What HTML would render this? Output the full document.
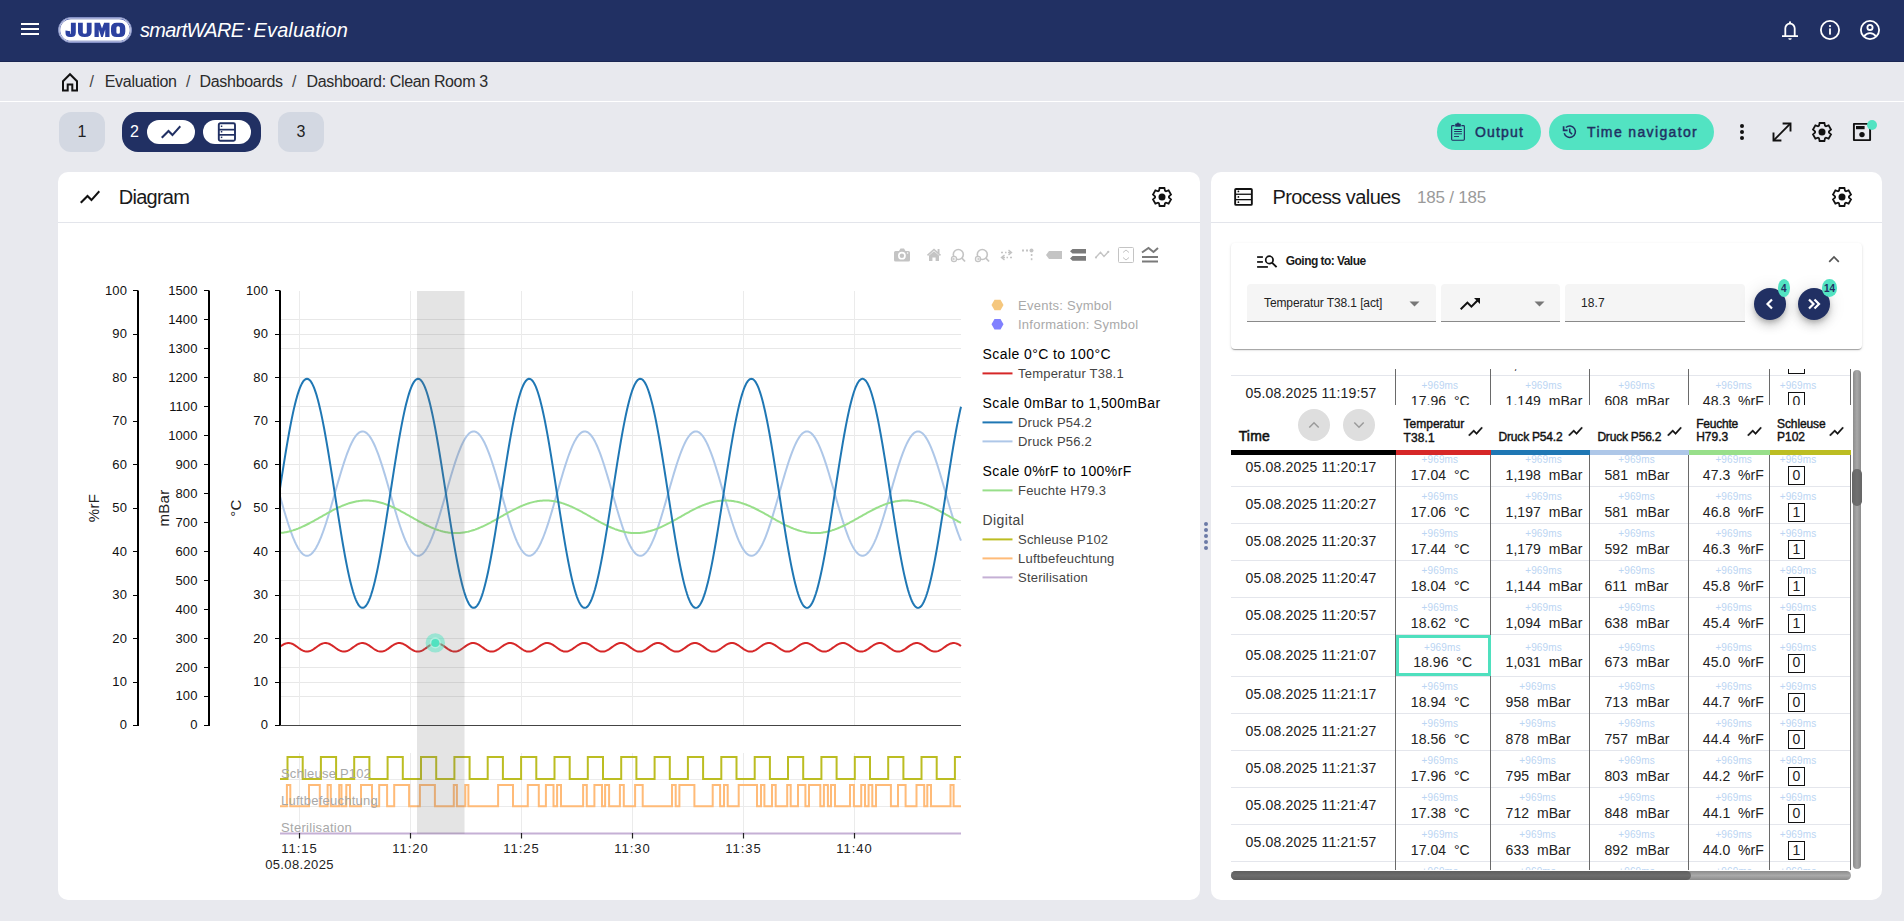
<!DOCTYPE html><html><head><meta charset="utf-8"><style>
html,body{margin:0;padding:0;width:1904px;height:921px;overflow:hidden;background:#E8E9EE;font-family:'Liberation Sans', sans-serif;}
.t{position:absolute;white-space:pre;font-family:'Liberation Sans', sans-serif;}
</style></head><body>
<div style="position:absolute;left:0px;top:0px;width:1904px;height:62px;background:#213063;border-radius:0;"></div>
<div style="position:absolute;left:0px;top:61px;width:1904px;height:1px;background:#1a2652;border-radius:0;"></div>
<div style="position:absolute;left:21px;top:23px;width:18px;height:2px;background:#fff;border-radius:0;"></div>
<div style="position:absolute;left:21px;top:28px;width:18px;height:2px;background:#fff;border-radius:0;"></div>
<div style="position:absolute;left:21px;top:33px;width:18px;height:2px;background:#fff;border-radius:0;"></div>
<div style="position:absolute;left:58px;top:17px;width:74px;height:26px;box-sizing:border-box;border-radius:13px;background:#fff;border:1.5px solid #8490c6;box-shadow:inset 0 0 0 0.6px #fff, inset 0 0 0 1.2px #4a5bab;"></div>
<svg style="position:absolute;left:0px;top:0px;overflow:visible;" width="200" height="60" viewBox="0 0 200 60"><path fill="#2c41a0" fill-rule="evenodd" d="M70.9 22.8 H75.8 V32.6 Q75.8 37.1 71.3 37.1 H69.9 Q65.5 37.1 65.5 32.8 V30.4 L70.2 31.2 V33.3 Q70.2 33.9 70.8 33.9 Q70.9 33.9 70.9 33.2 Z M78 22.8 H82.8 V32.2 Q82.8 33.7 84.8 33.7 Q86.8 33.7 86.8 32.2 V22.8 H91.6 V32.1 Q91.6 37.1 84.8 37.1 Q78 37.1 78 32.1 Z M94.5 37.1 V22.8 H99.9 L102 28.6 L104.1 22.8 H109.5 V37.1 H105.2 V29.4 L102.8 36.9 H101.2 L98.8 29.4 V37.1 Z M116.6 22.8 H119.7 Q125.3 22.8 125.3 28.3 V31.6 Q125.3 37.1 119.7 37.1 H116.6 Q111 37.1 111 31.6 V28.3 Q111 22.8 116.6 22.8 Z M117.9 26.2 Q116.4 26.2 116.4 27.7 V32.2 Q116.4 33.7 117.9 33.7 H118.4 Q119.9 33.7 119.9 32.2 V27.7 Q119.9 26.2 118.4 26.2 Z"/></svg>
<div class="t" style="left:140.00px;top:20.00px;font-size:20px;line-height:20px;color:#fff;font-weight:normal;letter-spacing:-0.7px;font-style:italic;">smartWARE</div>
<svg style="position:absolute;left:247px;top:27px;overflow:visible;" width="4" height="4" viewBox="0 0 4 4"><circle cx="2" cy="2" r="1.3" fill="#fff"/></svg>
<div class="t" style="left:253.60px;top:20.00px;font-size:20px;line-height:20px;color:#fff;font-weight:normal;letter-spacing:0.1px;font-style:italic;">Evaluation</div>
<svg style="position:absolute;left:1780px;top:20px;overflow:visible;" width="20" height="20" viewBox="0 0 20 20"><path d="M10 1.2 C10.6 1.2 11 1.6 11 2.1 L11 2.7 C13.8 3.3 15.6 5.7 15.6 8.6 L15.6 15.3 L18 15.3 L18 17 L2 17 L2 15.3 L4.4 15.3 L4.4 8.6 C4.4 5.7 6.2 3.3 9 2.7 L9 2.1 C9 1.6 9.4 1.2 10 1.2 Z M6.2 15.3 L13.8 15.3 L13.8 8.6 C13.8 6.3 12.2 4.4 10 4.4 C7.8 4.4 6.2 6.3 6.2 8.6 Z" fill="#fff"/><path d="M8.3 18.2 L11.7 18.2 C11.7 19.2 10.9 19.8 10 19.8 C9.1 19.8 8.3 19.2 8.3 18.2Z" fill="#fff"/></svg>
<svg style="position:absolute;left:1820px;top:20px;overflow:visible;" width="20" height="20" viewBox="0 0 20 20"><circle cx="10" cy="10" r="9.1" fill="none" stroke="#fff" stroke-width="1.8"/><rect x="9.1" y="8.4" width="1.8" height="6.2" fill="#fff"/><circle cx="10" cy="6.1" r="1.1" fill="#fff"/></svg>
<svg style="position:absolute;left:1860px;top:20px;overflow:visible;" width="20" height="20" viewBox="0 0 20 20"><circle cx="10" cy="10" r="9.1" fill="none" stroke="#fff" stroke-width="1.8"/><circle cx="10" cy="7.4" r="2.6" fill="none" stroke="#fff" stroke-width="1.8"/><path d="M4.2 16.2 C5.6 14.1 7.6 13.1 10 13.1 C12.4 13.1 14.4 14.1 15.8 16.2" fill="none" stroke="#fff" stroke-width="1.8"/></svg>
<div style="position:absolute;left:0px;top:101px;width:1904px;height:1px;background:#ffffff;border-radius:0;"></div>
<svg style="position:absolute;left:61px;top:72px;overflow:visible;" width="18" height="20" viewBox="0 0 18 20"><path d="M2 9.2 L9 2.2 L16 9.2 L16 18.4 L11.3 18.4 L11.3 12.6 L6.7 12.6 L6.7 18.4 L2 18.4 Z" fill="none" stroke="#111" stroke-width="2" stroke-linejoin="miter"/></svg>
<div class="t" style="left:89.50px;top:74.00px;font-size:16px;line-height:16px;color:#444;font-weight:normal;letter-spacing:0px;font-style:normal;">/</div>
<div class="t" style="left:104.70px;top:74.00px;font-size:16px;line-height:16px;color:#2b2b2b;font-weight:normal;letter-spacing:-0.27px;font-style:normal;">Evaluation</div>
<div class="t" style="left:186.00px;top:74.00px;font-size:16px;line-height:16px;color:#444;font-weight:normal;letter-spacing:0px;font-style:normal;">/</div>
<div class="t" style="left:199.50px;top:74.00px;font-size:16px;line-height:16px;color:#2b2b2b;font-weight:normal;letter-spacing:-0.3px;font-style:normal;">Dashboards</div>
<div class="t" style="left:292.00px;top:74.00px;font-size:16px;line-height:16px;color:#444;font-weight:normal;letter-spacing:0px;font-style:normal;">/</div>
<div class="t" style="left:306.60px;top:74.00px;font-size:16px;line-height:16px;color:#2b2b2b;font-weight:normal;letter-spacing:-0.36px;font-style:normal;">Dashboard: Clean Room 3</div>
<div style="position:absolute;left:59px;top:112px;width:46px;height:40px;background:#D3D8E2;border-radius:12px;"></div>
<div class="t" style="left:-218.00px;width:600px;text-align:center;top:124.00px;font-size:16px;line-height:16px;color:#222;font-weight:normal;letter-spacing:0px;font-style:normal;">1</div>
<div style="position:absolute;left:122px;top:112px;width:139px;height:40px;background:#213063;border-radius:16px;"></div>
<div class="t" style="left:130.00px;top:124.00px;font-size:16px;line-height:16px;color:#fff;font-weight:normal;letter-spacing:0px;font-style:normal;">2</div>
<div style="position:absolute;left:147px;top:120px;width:48px;height:24px;background:#fff;border-radius:12px;"></div>
<div style="position:absolute;left:203px;top:120px;width:48px;height:24px;background:#fff;border-radius:12px;"></div>
<svg style="position:absolute;left:159px;top:119.5px;overflow:visible;" width="24" height="24" viewBox="0 0 24 24"><path d="M3.5 18.49l6-6.01 4 4L22 6.92l-1.41-1.41-7.09 7.97-4-4L2 16.99z" fill="#213063"/></svg>
<svg style="position:absolute;left:217px;top:122px;overflow:visible;" width="20" height="20" viewBox="0 0 20 20"><rect x="1.8" y="1.3" width="16.2" height="17.5" rx="1.5" fill="none" stroke="#213063" stroke-width="1.9"/><rect x="1.8" y="6.8" width="16.2" height="1.7" fill="#213063"/><rect x="1.8" y="12" width="16.2" height="1.7" fill="#213063"/><rect x="3.8" y="3.5" width="1.5" height="1.5" fill="#213063"/><rect x="3.8" y="9" width="1.5" height="1.5" fill="#213063"/><rect x="3.8" y="14.6" width="1.5" height="1.5" fill="#213063"/></svg>
<div style="position:absolute;left:278px;top:112px;width:46px;height:40px;background:#D3D8E2;border-radius:12px;"></div>
<div class="t" style="left:1.00px;width:600px;text-align:center;top:124.00px;font-size:16px;line-height:16px;color:#222;font-weight:normal;letter-spacing:0px;font-style:normal;">3</div>
<div style="position:absolute;left:1437px;top:114px;width:104px;height:36px;background:#52E3C2;border-radius:18px;"></div>
<div style="position:absolute;left:1549px;top:114px;width:165px;height:36px;background:#52E3C2;border-radius:18px;"></div>
<div class="t" style="left:1475.00px;top:125.00px;font-size:14px;line-height:14px;color:#213063;font-weight:normal;letter-spacing:1.15px;font-style:normal;-webkit-text-stroke:0.45px #213063;">Output</div>
<div class="t" style="left:1587.00px;top:125.00px;font-size:14px;line-height:14px;color:#213063;font-weight:normal;letter-spacing:1.36px;font-style:normal;-webkit-text-stroke:0.45px #213063;">Time navigator</div>
<svg style="position:absolute;left:1450px;top:122px;overflow:visible;" width="16" height="20" viewBox="0 0 16 20"><rect x="1.65" y="3.55" width="12.7" height="14.7" rx="0.9" fill="none" stroke="#213063" stroke-width="1.15"/><rect x="4.6" y="2.2" width="6.8" height="2.6" fill="#52E3C2"/><rect x="5.2" y="1.4" width="5.6" height="3.4" rx="0.9" fill="#213063"/><circle cx="8" cy="1.3" r="0.9" fill="#213063"/><rect x="4" y="7.1" width="8" height="0.9" rx="0.4" fill="#213063"/><rect x="4" y="9.1" width="8" height="0.9" rx="0.4" fill="#213063"/><rect x="4" y="11.2" width="8" height="1.2" fill="#213063" opacity="0.75"/><rect x="4" y="14" width="5" height="0.9" fill="#213063"/></svg>
<svg style="position:absolute;left:1561px;top:124px;overflow:visible;" width="16" height="16" viewBox="0 0 16 16"><path d="M4.89 3.46 A5.7 5.7 0 1 1 3.22 9.27" fill="none" stroke="#213063" stroke-width="1.5"/><path d="M2.6 2.2 V6.4 H6.6" fill="none" stroke="#213063" stroke-width="1.7"/><path d="M8.7 4.6 V7.9 L11.1 10.3" fill="none" stroke="#213063" stroke-width="1.5"/></svg>
<svg style="position:absolute;left:1740px;top:124px;overflow:visible;" width="4" height="4" viewBox="0 0 4 4"><circle cx="2" cy="2" r="2" fill="#111"/></svg>
<svg style="position:absolute;left:1740px;top:130px;overflow:visible;" width="4" height="4" viewBox="0 0 4 4"><circle cx="2" cy="2" r="2" fill="#111"/></svg>
<svg style="position:absolute;left:1740px;top:136px;overflow:visible;" width="4" height="4" viewBox="0 0 4 4"><circle cx="2" cy="2" r="2" fill="#111"/></svg>
<svg style="position:absolute;left:1772px;top:122px;overflow:visible;" width="20" height="20" viewBox="0 0 20 20"><path d="M2.2 17.8 L17.8 2.2" stroke="#111" stroke-width="1.9"/><path d="M10.6 1.5 L18.5 1.5 L18.5 9.4" fill="none" stroke="#111" stroke-width="1.9"/><path d="M1.5 10.6 L1.5 18.5 L9.4 18.5" fill="none" stroke="#111" stroke-width="1.9"/></svg>
<svg style="position:absolute;left:1812px;top:122px;overflow:visible;" width="20" height="20" viewBox="0 0 20 20"><path d="M7.00 3.70 L7.60 1.00 L12.40 1.00 L13.00 3.70 L13.96 4.25 L16.59 3.42 L18.99 7.58 L16.96 9.45 L16.96 10.55 L18.99 12.42 L16.59 16.58 L13.96 15.75 L13.00 16.30 L12.40 19.00 L7.60 19.00 L7.00 16.30 L6.04 15.75 L3.41 16.58 L1.01 12.42 L3.04 10.55 L3.04 9.45 L1.01 7.58 L3.41 3.42 L6.04 4.25 Z" fill="none" stroke="#111" stroke-width="1.8" stroke-linejoin="miter"/><circle cx="10" cy="10" r="3.5" fill="#111"/></svg>
<svg style="position:absolute;left:1852px;top:122px;overflow:visible;" width="20" height="20" viewBox="0 0 20 20"><path d="M1.9 1.9 L15.5 1.9 L18.1 4.5 L18.1 18.1 L1.9 18.1 Z" fill="none" stroke="#111" stroke-width="1.9" stroke-linejoin="round"/><rect x="4" y="4" width="8.6" height="3.2" fill="#111"/><circle cx="10" cy="12.6" r="2.7" fill="#111"/></svg>
<svg style="position:absolute;left:1866px;top:119px;overflow:visible;" width="12" height="12" viewBox="0 0 12 12"><circle cx="6" cy="6" r="5" fill="#52E3C2"/></svg>
<div style="position:absolute;left:58px;top:172px;width:1142px;height:728px;background:#fff;border-radius:10px;"></div>
<div style="position:absolute;left:1211px;top:172px;width:671px;height:728px;background:#fff;border-radius:10px;"></div>
<div style="position:absolute;left:58px;top:222px;width:1142px;height:1px;background:#E3E5EB;border-radius:0;"></div>
<div style="position:absolute;left:1211px;top:222px;width:671px;height:1px;background:#E3E5EB;border-radius:0;"></div>
<svg style="position:absolute;left:78px;top:184.5px;overflow:visible;" width="24" height="24" viewBox="0 0 24 24"><path d="M3.5 18.49l6-6.01 4 4L22 6.92l-1.41-1.41-7.09 7.97-4-4L2 16.99z" fill="#111"/></svg>
<div class="t" style="left:118.80px;top:187.00px;font-size:20px;line-height:20px;color:#1a1a1a;font-weight:normal;letter-spacing:-0.75px;font-style:normal;">Diagram</div>
<svg style="position:absolute;left:1152.4px;top:186.9px;overflow:visible;" width="20" height="20" viewBox="0 0 20 20"><path d="M7.00 3.70 L7.60 1.00 L12.40 1.00 L13.00 3.70 L13.96 4.25 L16.59 3.42 L18.99 7.58 L16.96 9.45 L16.96 10.55 L18.99 12.42 L16.59 16.58 L13.96 15.75 L13.00 16.30 L12.40 19.00 L7.60 19.00 L7.00 16.30 L6.04 15.75 L3.41 16.58 L1.01 12.42 L3.04 10.55 L3.04 9.45 L1.01 7.58 L3.41 3.42 L6.04 4.25 Z" fill="none" stroke="#111" stroke-width="1.8" stroke-linejoin="miter"/><circle cx="10" cy="10" r="3.5" fill="#111"/></svg>
<svg style="position:absolute;left:1233px;top:187px;overflow:visible;" width="20" height="20" viewBox="0 0 20 20"><rect x="2.15" y="1.95" width="16.7" height="15.9" rx="0.9" fill="none" stroke="#111" stroke-width="1.9"/><rect x="2" y="6.6" width="17" height="1.3" fill="#111"/><rect x="2" y="12" width="17" height="1.3" fill="#111"/><circle cx="5.4" cy="4.4" r="0.9" fill="#111"/><circle cx="5.4" cy="9.9" r="0.9" fill="#111"/><circle cx="5.4" cy="15.2" r="0.9" fill="#111"/></svg>
<div class="t" style="left:1272.40px;top:187.00px;font-size:20px;line-height:20px;color:#1a1a1a;font-weight:normal;letter-spacing:-0.55px;font-style:normal;">Process values</div>
<div class="t" style="left:1417.00px;top:189.00px;font-size:17px;line-height:17px;color:#9a9a9a;font-weight:normal;letter-spacing:-0.2px;font-style:normal;">185 / 185</div>
<svg style="position:absolute;left:1832px;top:187px;overflow:visible;" width="20" height="20" viewBox="0 0 20 20"><path d="M7.00 3.70 L7.60 1.00 L12.40 1.00 L13.00 3.70 L13.96 4.25 L16.59 3.42 L18.99 7.58 L16.96 9.45 L16.96 10.55 L18.99 12.42 L16.59 16.58 L13.96 15.75 L13.00 16.30 L12.40 19.00 L7.60 19.00 L7.00 16.30 L6.04 15.75 L3.41 16.58 L1.01 12.42 L3.04 10.55 L3.04 9.45 L1.01 7.58 L3.41 3.42 L6.04 4.25 Z" fill="none" stroke="#111" stroke-width="1.8" stroke-linejoin="miter"/><circle cx="10" cy="10" r="3.5" fill="#111"/></svg>
<div style="position:absolute;left:1200px;top:172px;width:11px;height:728px;background:#E8E9EE;border-radius:0;"></div>
<svg style="position:absolute;left:1204px;top:522px;overflow:visible;" width="4" height="4" viewBox="0 0 4 4"><circle cx="2" cy="2" r="2" fill="#6b7aa6"/></svg>
<svg style="position:absolute;left:1204px;top:528px;overflow:visible;" width="4" height="4" viewBox="0 0 4 4"><circle cx="2" cy="2" r="2" fill="#6b7aa6"/></svg>
<svg style="position:absolute;left:1204px;top:534px;overflow:visible;" width="4" height="4" viewBox="0 0 4 4"><circle cx="2" cy="2" r="2" fill="#6b7aa6"/></svg>
<svg style="position:absolute;left:1204px;top:540px;overflow:visible;" width="4" height="4" viewBox="0 0 4 4"><circle cx="2" cy="2" r="2" fill="#6b7aa6"/></svg>
<svg style="position:absolute;left:1204px;top:546px;overflow:visible;" width="4" height="4" viewBox="0 0 4 4"><circle cx="2" cy="2" r="2" fill="#6b7aa6"/></svg>
<svg style="position:absolute;left:0;top:0" width="1904" height="921" viewBox="0 0 1904 921"><line x1="280.0" y1="682.5" x2="961.0" y2="682.5" stroke="#e8e8e8" stroke-width="1"/><line x1="280.0" y1="638.5" x2="961.0" y2="638.5" stroke="#e8e8e8" stroke-width="1"/><line x1="280.0" y1="595.5" x2="961.0" y2="595.5" stroke="#e8e8e8" stroke-width="1"/><line x1="280.0" y1="551.5" x2="961.0" y2="551.5" stroke="#e8e8e8" stroke-width="1"/><line x1="280.0" y1="508.5" x2="961.0" y2="508.5" stroke="#e8e8e8" stroke-width="1"/><line x1="280.0" y1="464.5" x2="961.0" y2="464.5" stroke="#e8e8e8" stroke-width="1"/><line x1="280.0" y1="421.5" x2="961.0" y2="421.5" stroke="#e8e8e8" stroke-width="1"/><line x1="280.0" y1="377.5" x2="961.0" y2="377.5" stroke="#e8e8e8" stroke-width="1"/><line x1="280.0" y1="334.5" x2="961.0" y2="334.5" stroke="#e8e8e8" stroke-width="1"/><line x1="280.0" y1="696.5" x2="961.0" y2="696.5" stroke="#e8e8e8" stroke-width="1"/><line x1="280.0" y1="667.5" x2="961.0" y2="667.5" stroke="#e8e8e8" stroke-width="1"/><line x1="280.0" y1="638.5" x2="961.0" y2="638.5" stroke="#e8e8e8" stroke-width="1"/><line x1="280.0" y1="609.5" x2="961.0" y2="609.5" stroke="#e8e8e8" stroke-width="1"/><line x1="280.0" y1="580.5" x2="961.0" y2="580.5" stroke="#e8e8e8" stroke-width="1"/><line x1="280.0" y1="551.5" x2="961.0" y2="551.5" stroke="#e8e8e8" stroke-width="1"/><line x1="280.0" y1="522.5" x2="961.0" y2="522.5" stroke="#e8e8e8" stroke-width="1"/><line x1="280.0" y1="493.5" x2="961.0" y2="493.5" stroke="#e8e8e8" stroke-width="1"/><line x1="280.0" y1="464.5" x2="961.0" y2="464.5" stroke="#e8e8e8" stroke-width="1"/><line x1="280.0" y1="435.5" x2="961.0" y2="435.5" stroke="#e8e8e8" stroke-width="1"/><line x1="280.0" y1="406.5" x2="961.0" y2="406.5" stroke="#e8e8e8" stroke-width="1"/><line x1="280.0" y1="377.5" x2="961.0" y2="377.5" stroke="#e8e8e8" stroke-width="1"/><line x1="280.0" y1="348.5" x2="961.0" y2="348.5" stroke="#e8e8e8" stroke-width="1"/><line x1="280.0" y1="319.5" x2="961.0" y2="319.5" stroke="#e8e8e8" stroke-width="1"/><line x1="299.5" y1="291.0" x2="299.5" y2="725.5" stroke="#ebebeb" stroke-width="1"/><line x1="299.5" y1="753" x2="299.5" y2="833" stroke="#ebebeb" stroke-width="1"/><line x1="410.5" y1="291.0" x2="410.5" y2="725.5" stroke="#ebebeb" stroke-width="1"/><line x1="410.5" y1="753" x2="410.5" y2="833" stroke="#ebebeb" stroke-width="1"/><line x1="521.5" y1="291.0" x2="521.5" y2="725.5" stroke="#ebebeb" stroke-width="1"/><line x1="521.5" y1="753" x2="521.5" y2="833" stroke="#ebebeb" stroke-width="1"/><line x1="632.5" y1="291.0" x2="632.5" y2="725.5" stroke="#ebebeb" stroke-width="1"/><line x1="632.5" y1="753" x2="632.5" y2="833" stroke="#ebebeb" stroke-width="1"/><line x1="743.5" y1="291.0" x2="743.5" y2="725.5" stroke="#ebebeb" stroke-width="1"/><line x1="743.5" y1="753" x2="743.5" y2="833" stroke="#ebebeb" stroke-width="1"/><line x1="854.5" y1="291.0" x2="854.5" y2="725.5" stroke="#ebebeb" stroke-width="1"/><line x1="854.5" y1="753" x2="854.5" y2="833" stroke="#ebebeb" stroke-width="1"/><line x1="280.0" y1="779.5" x2="961.0" y2="779.5" stroke="#ebebeb" stroke-width="1"/><line x1="280.0" y1="806.5" x2="961.0" y2="806.5" stroke="#ebebeb" stroke-width="1"/><path d="M280.0 496.33 L281.0 499.84 L282.0 503.33 L283.0 506.78 L284.0 510.19 L285.0 513.56 L286.0 516.85 L287.0 520.07 L288.0 523.21 L289.0 526.26 L290.0 529.19 L291.0 532.02 L292.0 534.72 L293.0 537.29 L294.0 539.72 L295.0 542.01 L296.0 544.14 L297.0 546.10 L298.0 547.90 L299.0 549.53 L300.0 550.98 L301.0 552.24 L302.0 553.31 L303.0 554.20 L304.0 554.89 L305.0 555.39 L306.0 555.68 L307.0 555.78 L308.0 555.68 L309.0 555.39 L310.0 554.89 L311.0 554.20 L312.0 553.31 L313.0 552.24 L314.0 550.98 L315.0 549.53 L316.0 547.90 L317.0 546.10 L318.0 544.14 L319.0 542.01 L320.0 539.72 L321.0 537.29 L322.0 534.72 L323.0 532.02 L324.0 529.19 L325.0 526.26 L326.0 523.21 L327.0 520.07 L328.0 516.85 L329.0 513.56 L330.0 510.19 L331.0 506.78 L332.0 503.33 L333.0 499.84 L334.0 496.33 L335.0 492.82 L336.0 489.30 L337.0 485.80 L338.0 482.33 L339.0 478.89 L340.0 475.50 L341.0 472.17 L342.0 468.90 L343.0 465.72 L344.0 462.62 L345.0 459.62 L346.0 456.73 L347.0 453.96 L348.0 451.32 L349.0 448.81 L350.0 446.44 L351.0 444.23 L352.0 442.17 L353.0 440.28 L354.0 438.56 L355.0 437.01 L356.0 435.65 L357.0 434.47 L358.0 433.48 L359.0 432.68 L360.0 432.08 L361.0 431.67 L362.0 431.46 L363.0 431.45 L364.0 431.64 L365.0 432.03 L366.0 432.61 L367.0 433.39 L368.0 434.36 L369.0 435.52 L370.0 436.87 L371.0 438.40 L372.0 440.10 L373.0 441.98 L374.0 444.02 L375.0 446.22 L376.0 448.57 L377.0 451.06 L378.0 453.69 L379.0 456.45 L380.0 459.33 L381.0 462.32 L382.0 465.40 L383.0 468.58 L384.0 471.84 L385.0 475.16 L386.0 478.55 L387.0 481.98 L388.0 485.46 L389.0 488.95 L390.0 492.46 L391.0 495.98 L392.0 499.49 L393.0 502.98 L394.0 506.44 L395.0 509.86 L396.0 513.22 L397.0 516.53 L398.0 519.76 L399.0 522.90 L400.0 525.96 L401.0 528.91 L402.0 531.74 L403.0 534.46 L404.0 537.04 L405.0 539.49 L406.0 541.79 L407.0 543.93 L408.0 545.91 L409.0 547.73 L410.0 549.37 L411.0 550.84 L412.0 552.12 L413.0 553.22 L414.0 554.12 L415.0 554.83 L416.0 555.35 L417.0 555.66 L418.0 555.78 L419.0 555.70 L420.0 555.43 L421.0 554.95 L422.0 554.28 L423.0 553.41 L424.0 552.36 L425.0 551.11 L426.0 549.68 L427.0 548.07 L428.0 546.29 L429.0 544.34 L430.0 542.23 L431.0 539.96 L432.0 537.54 L433.0 534.98 L434.0 532.30 L435.0 529.48 L436.0 526.55 L437.0 523.52 L438.0 520.39 L439.0 517.18 L440.0 513.89 L441.0 510.53 L442.0 507.12 L443.0 503.67 L444.0 500.19 L445.0 496.68 L446.0 493.17 L447.0 489.65 L448.0 486.15 L449.0 482.68 L450.0 479.23 L451.0 475.84 L452.0 472.50 L453.0 469.23 L454.0 466.03 L455.0 462.93 L456.0 459.92 L457.0 457.02 L458.0 454.23 L459.0 451.58 L460.0 449.06 L461.0 446.67 L462.0 444.44 L463.0 442.37 L464.0 440.46 L465.0 438.72 L466.0 437.16 L467.0 435.78 L468.0 434.58 L469.0 433.57 L470.0 432.75 L471.0 432.13 L472.0 431.70 L473.0 431.47 L474.0 431.44 L475.0 431.61 L476.0 431.98 L477.0 432.54 L478.0 433.30 L479.0 434.25 L480.0 435.40 L481.0 436.73 L482.0 438.24 L483.0 439.92 L484.0 441.78 L485.0 443.81 L486.0 445.99 L487.0 448.33 L488.0 450.81 L489.0 453.42 L490.0 456.17 L491.0 459.04 L492.0 462.01 L493.0 465.09 L494.0 468.26 L495.0 471.51 L496.0 474.83 L497.0 478.21 L498.0 481.64 L499.0 485.11 L500.0 488.60 L501.0 492.11 L502.0 495.63 L503.0 499.14 L504.0 502.63 L505.0 506.09 L506.0 509.52 L507.0 512.89 L508.0 516.20 L509.0 519.44 L510.0 522.59 L511.0 525.66 L512.0 528.62 L513.0 531.46 L514.0 534.19 L515.0 536.79 L516.0 539.25 L517.0 541.56 L518.0 543.72 L519.0 545.72 L520.0 547.56 L521.0 549.22 L522.0 550.70 L523.0 552.00 L524.0 553.11 L525.0 554.04 L526.0 554.77 L527.0 555.30 L528.0 555.64 L529.0 555.78 L530.0 555.72 L531.0 555.46 L532.0 555.01 L533.0 554.35 L534.0 553.51 L535.0 552.47 L536.0 551.24 L537.0 549.83 L538.0 548.24 L539.0 546.48 L540.0 544.54 L541.0 542.45 L542.0 540.19 L543.0 537.79 L544.0 535.25 L545.0 532.57 L546.0 529.77 L547.0 526.85 L548.0 523.83 L549.0 520.71 L550.0 517.50 L551.0 514.22 L552.0 510.87 L553.0 507.47 L554.0 504.02 L555.0 500.54 L556.0 497.03 L557.0 493.52 L558.0 490.01 L559.0 486.50 L560.0 483.02 L561.0 479.58 L562.0 476.17 L563.0 472.83 L564.0 469.55 L565.0 466.35 L566.0 463.23 L567.0 460.21 L568.0 457.30 L569.0 454.51 L570.0 451.84 L571.0 449.30 L572.0 446.91 L573.0 444.66 L574.0 442.57 L575.0 440.65 L576.0 438.89 L577.0 437.31 L578.0 435.91 L579.0 434.69 L580.0 433.66 L581.0 432.82 L582.0 432.18 L583.0 431.73 L584.0 431.49 L585.0 431.44 L586.0 431.59 L587.0 431.93 L588.0 432.48 L589.0 433.22 L590.0 434.15 L591.0 435.27 L592.0 436.58 L593.0 438.08 L594.0 439.75 L595.0 441.59 L596.0 443.60 L597.0 445.76 L598.0 448.09 L599.0 450.55 L600.0 453.16 L601.0 455.89 L602.0 458.74 L603.0 461.71 L604.0 464.78 L605.0 467.94 L606.0 471.18 L607.0 474.49 L608.0 477.87 L609.0 481.29 L610.0 484.76 L611.0 488.25 L612.0 491.76 L613.0 495.28 L614.0 498.79 L615.0 502.28 L616.0 505.75 L617.0 509.18 L618.0 512.55 L619.0 515.87 L620.0 519.12 L621.0 522.28 L622.0 525.35 L623.0 528.32 L624.0 531.18 L625.0 533.92 L626.0 536.54 L627.0 539.01 L628.0 541.34 L629.0 543.51 L630.0 545.53 L631.0 547.38 L632.0 549.06 L633.0 550.56 L634.0 551.88 L635.0 553.01 L636.0 553.95 L637.0 554.70 L638.0 555.26 L639.0 555.62 L640.0 555.78 L641.0 555.74 L642.0 555.50 L643.0 555.06 L644.0 554.43 L645.0 553.60 L646.0 552.58 L647.0 551.37 L648.0 549.98 L649.0 548.41 L650.0 546.66 L651.0 544.74 L652.0 542.66 L653.0 540.42 L654.0 538.04 L655.0 535.51 L656.0 532.84 L657.0 530.05 L658.0 527.15 L659.0 524.14 L660.0 521.03 L661.0 517.83 L662.0 514.55 L663.0 511.21 L664.0 507.81 L665.0 504.37 L666.0 500.89 L667.0 497.39 L668.0 493.87 L669.0 490.36 L670.0 486.85 L671.0 483.37 L672.0 479.92 L673.0 476.51 L674.0 473.16 L675.0 469.87 L676.0 466.66 L677.0 463.54 L678.0 460.51 L679.0 457.59 L680.0 454.78 L681.0 452.10 L682.0 449.55 L683.0 447.14 L684.0 444.88 L685.0 442.77 L686.0 440.83 L687.0 439.06 L688.0 437.46 L689.0 436.04 L690.0 434.80 L691.0 433.75 L692.0 432.90 L693.0 432.24 L694.0 431.77 L695.0 431.50 L696.0 431.43 L697.0 431.56 L698.0 431.89 L699.0 432.41 L700.0 433.14 L701.0 434.05 L702.0 435.15 L703.0 436.44 L704.0 437.92 L705.0 439.57 L706.0 441.40 L707.0 443.39 L708.0 445.54 L709.0 447.85 L710.0 450.30 L711.0 452.89 L712.0 455.61 L713.0 458.45 L714.0 461.41 L715.0 464.47 L716.0 467.62 L717.0 470.85 L718.0 474.16 L719.0 477.53 L720.0 480.95 L721.0 484.41 L722.0 487.90 L723.0 491.41 L724.0 494.93 L725.0 498.44 L726.0 501.93 L727.0 505.40 L728.0 508.84 L729.0 512.22 L730.0 515.54 L731.0 518.80 L732.0 521.97 L733.0 525.05 L734.0 528.03 L735.0 530.90 L736.0 533.66 L737.0 536.28 L738.0 538.77 L739.0 541.11 L740.0 543.30 L741.0 545.34 L742.0 547.20 L743.0 548.90 L744.0 550.42 L745.0 551.76 L746.0 552.91 L747.0 553.87 L748.0 554.64 L749.0 555.21 L750.0 555.59 L751.0 555.77 L752.0 555.75 L753.0 555.53 L754.0 555.11 L755.0 554.50 L756.0 553.69 L757.0 552.69 L758.0 551.50 L759.0 550.13 L760.0 548.57 L761.0 546.84 L762.0 544.94 L763.0 542.88 L764.0 540.66 L765.0 538.28 L766.0 535.77 L767.0 533.12 L768.0 530.34 L769.0 527.44 L770.0 524.44 L771.0 521.34 L772.0 518.15 L773.0 514.88 L774.0 511.55 L775.0 508.15 L776.0 504.71 L777.0 501.24 L778.0 497.74 L779.0 494.22 L780.0 490.71 L781.0 487.20 L782.0 483.72 L783.0 480.26 L784.0 476.85 L785.0 473.49 L786.0 470.20 L787.0 466.98 L788.0 463.85 L789.0 460.81 L790.0 457.88 L791.0 455.06 L792.0 452.36 L793.0 449.80 L794.0 447.37 L795.0 445.10 L796.0 442.98 L797.0 441.02 L798.0 439.23 L799.0 437.61 L800.0 436.17 L801.0 434.92 L802.0 433.85 L803.0 432.98 L804.0 432.29 L805.0 431.81 L806.0 431.52 L807.0 431.43 L808.0 431.54 L809.0 431.85 L810.0 432.35 L811.0 433.05 L812.0 433.95 L813.0 435.03 L814.0 436.31 L815.0 437.76 L816.0 439.40 L817.0 441.21 L818.0 443.18 L819.0 445.32 L820.0 447.61 L821.0 450.05 L822.0 452.63 L823.0 455.33 L824.0 458.16 L825.0 461.11 L826.0 464.16 L827.0 467.30 L828.0 470.53 L829.0 473.83 L830.0 477.19 L831.0 480.61 L832.0 484.06 L833.0 487.55 L834.0 491.06 L835.0 494.57 L836.0 498.09 L837.0 501.59 L838.0 505.06 L839.0 508.49 L840.0 511.88 L841.0 515.21 L842.0 518.47 L843.0 521.65 L844.0 524.75 L845.0 527.74 L846.0 530.62 L847.0 533.39 L848.0 536.02 L849.0 538.53 L850.0 540.88 L851.0 543.09 L852.0 545.14 L853.0 547.02 L854.0 548.74 L855.0 550.27 L856.0 551.63 L857.0 552.80 L858.0 553.78 L859.0 554.57 L860.0 555.16 L861.0 555.56 L862.0 555.76 L863.0 555.76 L864.0 555.56 L865.0 555.16 L866.0 554.57 L867.0 553.78 L868.0 552.80 L869.0 551.63 L870.0 550.27 L871.0 548.74 L872.0 547.02 L873.0 545.14 L874.0 543.09 L875.0 540.88 L876.0 538.53 L877.0 536.02 L878.0 533.39 L879.0 530.62 L880.0 527.74 L881.0 524.75 L882.0 521.65 L883.0 518.47 L884.0 515.21 L885.0 511.88 L886.0 508.49 L887.0 505.06 L888.0 501.59 L889.0 498.09 L890.0 494.57 L891.0 491.06 L892.0 487.55 L893.0 484.06 L894.0 480.61 L895.0 477.19 L896.0 473.83 L897.0 470.53 L898.0 467.30 L899.0 464.16 L900.0 461.11 L901.0 458.16 L902.0 455.33 L903.0 452.63 L904.0 450.05 L905.0 447.61 L906.0 445.32 L907.0 443.18 L908.0 441.21 L909.0 439.40 L910.0 437.76 L911.0 436.31 L912.0 435.03 L913.0 433.95 L914.0 433.05 L915.0 432.35 L916.0 431.85 L917.0 431.54 L918.0 431.43 L919.0 431.52 L920.0 431.81 L921.0 432.29 L922.0 432.98 L923.0 433.85 L924.0 434.92 L925.0 436.17 L926.0 437.61 L927.0 439.23 L928.0 441.02 L929.0 442.98 L930.0 445.10 L931.0 447.37 L932.0 449.80 L933.0 452.36 L934.0 455.06 L935.0 457.88 L936.0 460.81 L937.0 463.85 L938.0 466.98 L939.0 470.20 L940.0 473.49 L941.0 476.85 L942.0 480.26 L943.0 483.72 L944.0 487.20 L945.0 490.71 L946.0 494.22 L947.0 497.74 L948.0 501.24 L949.0 504.71 L950.0 508.15 L951.0 511.55 L952.0 514.88 L953.0 518.15 L954.0 521.34 L955.0 524.44 L956.0 527.44 L957.0 530.34 L958.0 533.12 L959.0 535.77 L960.0 538.28 L961.0 540.66" fill="none" stroke="#AEC7E8" stroke-width="2" stroke-linejoin="round"/><path d="M280.0 532.96 L281.0 532.87 L282.0 532.76 L283.0 532.64 L284.0 532.49 L285.0 532.33 L286.0 532.15 L287.0 531.94 L288.0 531.72 L289.0 531.49 L290.0 531.23 L291.0 530.96 L292.0 530.66 L293.0 530.36 L294.0 530.03 L295.0 529.69 L296.0 529.33 L297.0 528.96 L298.0 528.58 L299.0 528.17 L300.0 527.76 L301.0 527.33 L302.0 526.89 L303.0 526.44 L304.0 525.97 L305.0 525.49 L306.0 525.01 L307.0 524.51 L308.0 524.00 L309.0 523.49 L310.0 522.96 L311.0 522.43 L312.0 521.89 L313.0 521.35 L314.0 520.80 L315.0 520.24 L316.0 519.69 L317.0 519.12 L318.0 518.56 L319.0 517.99 L320.0 517.42 L321.0 516.85 L322.0 516.28 L323.0 515.71 L324.0 515.15 L325.0 514.58 L326.0 514.02 L327.0 513.46 L328.0 512.90 L329.0 512.35 L330.0 511.81 L331.0 511.27 L332.0 510.74 L333.0 510.21 L334.0 509.69 L335.0 509.19 L336.0 508.69 L337.0 508.20 L338.0 507.72 L339.0 507.25 L340.0 506.80 L341.0 506.35 L342.0 505.92 L343.0 505.51 L344.0 505.10 L345.0 504.71 L346.0 504.34 L347.0 503.98 L348.0 503.64 L349.0 503.31 L350.0 503.00 L351.0 502.71 L352.0 502.43 L353.0 502.17 L354.0 501.93 L355.0 501.71 L356.0 501.50 L357.0 501.32 L358.0 501.15 L359.0 501.00 L360.0 500.87 L361.0 500.76 L362.0 500.67 L363.0 500.61 L364.0 500.56 L365.0 500.53 L366.0 500.52 L367.0 500.53 L368.0 500.56 L369.0 500.61 L370.0 500.67 L371.0 500.76 L372.0 500.87 L373.0 501.00 L374.0 501.15 L375.0 501.32 L376.0 501.50 L377.0 501.71 L378.0 501.93 L379.0 502.17 L380.0 502.43 L381.0 502.71 L382.0 503.00 L383.0 503.31 L384.0 503.64 L385.0 503.98 L386.0 504.34 L387.0 504.71 L388.0 505.10 L389.0 505.51 L390.0 505.92 L391.0 506.35 L392.0 506.80 L393.0 507.25 L394.0 507.72 L395.0 508.20 L396.0 508.69 L397.0 509.19 L398.0 509.69 L399.0 510.21 L400.0 510.74 L401.0 511.27 L402.0 511.81 L403.0 512.35 L404.0 512.90 L405.0 513.46 L406.0 514.02 L407.0 514.58 L408.0 515.15 L409.0 515.71 L410.0 516.28 L411.0 516.85 L412.0 517.42 L413.0 517.99 L414.0 518.56 L415.0 519.12 L416.0 519.69 L417.0 520.24 L418.0 520.80 L419.0 521.35 L420.0 521.89 L421.0 522.43 L422.0 522.96 L423.0 523.49 L424.0 524.00 L425.0 524.51 L426.0 525.01 L427.0 525.49 L428.0 525.97 L429.0 526.44 L430.0 526.89 L431.0 527.33 L432.0 527.76 L433.0 528.17 L434.0 528.58 L435.0 528.96 L436.0 529.33 L437.0 529.69 L438.0 530.03 L439.0 530.36 L440.0 530.66 L441.0 530.96 L442.0 531.23 L443.0 531.49 L444.0 531.72 L445.0 531.94 L446.0 532.15 L447.0 532.33 L448.0 532.49 L449.0 532.64 L450.0 532.76 L451.0 532.87 L452.0 532.96 L453.0 533.02 L454.0 533.07 L455.0 533.10 L456.0 533.10 L457.0 533.09 L458.0 533.06 L459.0 533.00 L460.0 532.93 L461.0 532.84 L462.0 532.73 L463.0 532.60 L464.0 532.45 L465.0 532.28 L466.0 532.09 L467.0 531.88 L468.0 531.66 L469.0 531.41 L470.0 531.15 L471.0 530.87 L472.0 530.57 L473.0 530.26 L474.0 529.93 L475.0 529.59 L476.0 529.22 L477.0 528.85 L478.0 528.46 L479.0 528.05 L480.0 527.63 L481.0 527.20 L482.0 526.75 L483.0 526.30 L484.0 525.83 L485.0 525.35 L486.0 524.86 L487.0 524.36 L488.0 523.85 L489.0 523.33 L490.0 522.80 L491.0 522.27 L492.0 521.73 L493.0 521.18 L494.0 520.63 L495.0 520.08 L496.0 519.52 L497.0 518.95 L498.0 518.39 L499.0 517.82 L500.0 517.25 L501.0 516.68 L502.0 516.11 L503.0 515.54 L504.0 514.98 L505.0 514.41 L506.0 513.85 L507.0 513.29 L508.0 512.74 L509.0 512.19 L510.0 511.64 L511.0 511.11 L512.0 510.58 L513.0 510.06 L514.0 509.54 L515.0 509.04 L516.0 508.54 L517.0 508.05 L518.0 507.58 L519.0 507.12 L520.0 506.66 L521.0 506.22 L522.0 505.80 L523.0 505.38 L524.0 504.99 L525.0 504.60 L526.0 504.23 L527.0 503.88 L528.0 503.54 L529.0 503.22 L530.0 502.91 L531.0 502.62 L532.0 502.35 L533.0 502.10 L534.0 501.86 L535.0 501.64 L536.0 501.44 L537.0 501.26 L538.0 501.10 L539.0 500.96 L540.0 500.84 L541.0 500.74 L542.0 500.65 L543.0 500.59 L544.0 500.54 L545.0 500.52 L546.0 500.52 L547.0 500.53 L548.0 500.57 L549.0 500.62 L550.0 500.70 L551.0 500.79 L552.0 500.91 L553.0 501.04 L554.0 501.20 L555.0 501.37 L556.0 501.56 L557.0 501.77 L558.0 502.00 L559.0 502.25 L560.0 502.51 L561.0 502.79 L562.0 503.09 L563.0 503.41 L564.0 503.74 L565.0 504.09 L566.0 504.45 L567.0 504.83 L568.0 505.22 L569.0 505.63 L570.0 506.05 L571.0 506.49 L572.0 506.93 L573.0 507.39 L574.0 507.86 L575.0 508.34 L576.0 508.84 L577.0 509.34 L578.0 509.85 L579.0 510.37 L580.0 510.89 L581.0 511.43 L582.0 511.97 L583.0 512.52 L584.0 513.07 L585.0 513.63 L586.0 514.19 L587.0 514.75 L588.0 515.32 L589.0 515.88 L590.0 516.45 L591.0 517.02 L592.0 517.59 L593.0 518.16 L594.0 518.73 L595.0 519.29 L596.0 519.85 L597.0 520.41 L598.0 520.96 L599.0 521.51 L600.0 522.06 L601.0 522.59 L602.0 523.12 L603.0 523.64 L604.0 524.15 L605.0 524.66 L606.0 525.15 L607.0 525.64 L608.0 526.11 L609.0 526.57 L610.0 527.02 L611.0 527.46 L612.0 527.88 L613.0 528.30 L614.0 528.69 L615.0 529.08 L616.0 529.44 L617.0 529.79 L618.0 530.13 L619.0 530.45 L620.0 530.75 L621.0 531.04 L622.0 531.31 L623.0 531.56 L624.0 531.79 L625.0 532.01 L626.0 532.20 L627.0 532.38 L628.0 532.54 L629.0 532.68 L630.0 532.80 L631.0 532.90 L632.0 532.98 L633.0 533.04 L634.0 533.08 L635.0 533.10 L636.0 533.10 L637.0 533.08 L638.0 533.04 L639.0 532.98 L640.0 532.91 L641.0 532.81 L642.0 532.69 L643.0 532.55 L644.0 532.40 L645.0 532.22 L646.0 532.03 L647.0 531.81 L648.0 531.58 L649.0 531.33 L650.0 531.07 L651.0 530.78 L652.0 530.48 L653.0 530.16 L654.0 529.83 L655.0 529.48 L656.0 529.11 L657.0 528.73 L658.0 528.34 L659.0 527.93 L660.0 527.50 L661.0 527.07 L662.0 526.62 L663.0 526.16 L664.0 525.69 L665.0 525.20 L666.0 524.71 L667.0 524.21 L668.0 523.69 L669.0 523.17 L670.0 522.64 L671.0 522.11 L672.0 521.57 L673.0 521.02 L674.0 520.47 L675.0 519.91 L676.0 519.35 L677.0 518.78 L678.0 518.22 L679.0 517.65 L680.0 517.08 L681.0 516.51 L682.0 515.94 L683.0 515.37 L684.0 514.81 L685.0 514.24 L686.0 513.68 L687.0 513.12 L688.0 512.57 L689.0 512.02 L690.0 511.48 L691.0 510.95 L692.0 510.42 L693.0 509.90 L694.0 509.39 L695.0 508.89 L696.0 508.39 L697.0 507.91 L698.0 507.44 L699.0 506.98 L700.0 506.53 L701.0 506.09 L702.0 505.67 L703.0 505.26 L704.0 504.87 L705.0 504.49 L706.0 504.12 L707.0 503.77 L708.0 503.44 L709.0 503.12 L710.0 502.82 L711.0 502.54 L712.0 502.27 L713.0 502.02 L714.0 501.79 L715.0 501.58 L716.0 501.39 L717.0 501.21 L718.0 501.06 L719.0 500.92 L720.0 500.81 L721.0 500.71 L722.0 500.63 L723.0 500.57 L724.0 500.54 L725.0 500.52 L726.0 500.52 L727.0 500.54 L728.0 500.58 L729.0 500.64 L730.0 500.73 L731.0 500.83 L732.0 500.95 L733.0 501.09 L734.0 501.25 L735.0 501.43 L736.0 501.62 L737.0 501.84 L738.0 502.07 L739.0 502.32 L740.0 502.59 L741.0 502.88 L742.0 503.18 L743.0 503.50 L744.0 503.84 L745.0 504.19 L746.0 504.56 L747.0 504.95 L748.0 505.34 L749.0 505.76 L750.0 506.18 L751.0 506.62 L752.0 507.07 L753.0 507.53 L754.0 508.01 L755.0 508.49 L756.0 508.99 L757.0 509.49 L758.0 510.00 L759.0 510.52 L760.0 511.05 L761.0 511.59 L762.0 512.13 L763.0 512.68 L764.0 513.24 L765.0 513.79 L766.0 514.36 L767.0 514.92 L768.0 515.49 L769.0 516.06 L770.0 516.62 L771.0 517.19 L772.0 517.76 L773.0 518.33 L774.0 518.90 L775.0 519.46 L776.0 520.02 L777.0 520.58 L778.0 521.13 L779.0 521.68 L780.0 522.22 L781.0 522.75 L782.0 523.28 L783.0 523.80 L784.0 524.31 L785.0 524.81 L786.0 525.30 L787.0 525.78 L788.0 526.25 L789.0 526.71 L790.0 527.16 L791.0 527.59 L792.0 528.01 L793.0 528.42 L794.0 528.81 L795.0 529.19 L796.0 529.55 L797.0 529.90 L798.0 530.23 L799.0 530.54 L800.0 530.84 L801.0 531.12 L802.0 531.39 L803.0 531.63 L804.0 531.86 L805.0 532.07 L806.0 532.26 L807.0 532.43 L808.0 532.58 L809.0 532.72 L810.0 532.83 L811.0 532.92 L812.0 533.00 L813.0 533.05 L814.0 533.09 L815.0 533.10 L816.0 533.10 L817.0 533.07 L818.0 533.03 L819.0 532.96 L820.0 532.88 L821.0 532.78 L822.0 532.65 L823.0 532.51 L824.0 532.35 L825.0 532.17 L826.0 531.97 L827.0 531.75 L828.0 531.51 L829.0 531.26 L830.0 530.98 L831.0 530.69 L832.0 530.39 L833.0 530.06 L834.0 529.73 L835.0 529.37 L836.0 529.00 L837.0 528.61 L838.0 528.21 L839.0 527.80 L840.0 527.37 L841.0 526.93 L842.0 526.48 L843.0 526.02 L844.0 525.54 L845.0 525.06 L846.0 524.56 L847.0 524.05 L848.0 523.54 L849.0 523.02 L850.0 522.48 L851.0 521.95 L852.0 521.40 L853.0 520.85 L854.0 520.30 L855.0 519.74 L856.0 519.18 L857.0 518.61 L858.0 518.05 L859.0 517.48 L860.0 516.91 L861.0 516.34 L862.0 515.77 L863.0 515.20 L864.0 514.64 L865.0 514.07 L866.0 513.51 L867.0 512.96 L868.0 512.41 L869.0 511.86 L870.0 511.32 L871.0 510.79 L872.0 510.26 L873.0 509.75 L874.0 509.24 L875.0 508.74 L876.0 508.25 L877.0 507.77 L878.0 507.30 L879.0 506.84 L880.0 506.40 L881.0 505.97 L882.0 505.55 L883.0 505.14 L884.0 504.75 L885.0 504.38 L886.0 504.02 L887.0 503.67 L888.0 503.34 L889.0 503.03 L890.0 502.73 L891.0 502.46 L892.0 502.20 L893.0 501.95 L894.0 501.73 L895.0 501.52 L896.0 501.33 L897.0 501.17 L898.0 501.02 L899.0 500.89 L900.0 500.77 L901.0 500.68 L902.0 500.61 L903.0 500.56 L904.0 500.53 L905.0 500.52 L906.0 500.52 L907.0 500.55 L908.0 500.60 L909.0 500.67 L910.0 500.75 L911.0 500.86 L912.0 500.99 L913.0 501.13 L914.0 501.30 L915.0 501.48 L916.0 501.68 L917.0 501.91 L918.0 502.15 L919.0 502.40 L920.0 502.68 L921.0 502.97 L922.0 503.28 L923.0 503.60 L924.0 503.95 L925.0 504.30 L926.0 504.68 L927.0 505.06 L928.0 505.47 L929.0 505.88 L930.0 506.31 L931.0 506.75 L932.0 507.21 L933.0 507.67 L934.0 508.15 L935.0 508.64 L936.0 509.14 L937.0 509.64 L938.0 510.16 L939.0 510.68 L940.0 511.21 L941.0 511.75 L942.0 512.30 L943.0 512.85 L944.0 513.40 L945.0 513.96 L946.0 514.52 L947.0 515.09 L948.0 515.66 L949.0 516.23 L950.0 516.80 L951.0 517.37 L952.0 517.93 L953.0 518.50 L954.0 519.07 L955.0 519.63 L956.0 520.19 L957.0 520.74 L958.0 521.29 L959.0 521.84 L960.0 522.38 L961.0 522.91" fill="none" stroke="#98DF8A" stroke-width="2" stroke-linejoin="round"/><path d="M280.0 488.33 L281.0 481.87 L282.0 475.45 L283.0 469.08 L284.0 462.79 L285.0 456.60 L286.0 450.53 L287.0 444.59 L288.0 438.81 L289.0 433.21 L290.0 427.79 L291.0 422.59 L292.0 417.61 L293.0 412.88 L294.0 408.40 L295.0 404.19 L296.0 400.27 L297.0 396.65 L298.0 393.33 L299.0 390.34 L300.0 387.67 L301.0 385.34 L302.0 383.36 L303.0 381.73 L304.0 380.46 L305.0 379.54 L306.0 379.00 L307.0 378.81 L308.0 379.00 L309.0 379.54 L310.0 380.46 L311.0 381.73 L312.0 383.36 L313.0 385.34 L314.0 387.67 L315.0 390.34 L316.0 393.33 L317.0 396.65 L318.0 400.27 L319.0 404.19 L320.0 408.40 L321.0 412.88 L322.0 417.61 L323.0 422.59 L324.0 427.79 L325.0 433.21 L326.0 438.81 L327.0 444.59 L328.0 450.53 L329.0 456.60 L330.0 462.79 L331.0 469.08 L332.0 475.45 L333.0 481.87 L334.0 488.33 L335.0 494.80 L336.0 501.28 L337.0 507.72 L338.0 514.12 L339.0 520.45 L340.0 526.70 L341.0 532.84 L342.0 538.85 L343.0 544.72 L344.0 550.43 L345.0 555.95 L346.0 561.27 L347.0 566.37 L348.0 571.24 L349.0 575.87 L350.0 580.22 L351.0 584.30 L352.0 588.09 L353.0 591.58 L354.0 594.75 L355.0 597.60 L356.0 600.11 L357.0 602.29 L358.0 604.11 L359.0 605.58 L360.0 606.69 L361.0 607.44 L362.0 607.83 L363.0 607.84 L364.0 607.50 L365.0 606.78 L366.0 605.71 L367.0 604.27 L368.0 602.48 L369.0 600.34 L370.0 597.86 L371.0 595.05 L372.0 591.91 L373.0 588.45 L374.0 584.70 L375.0 580.64 L376.0 576.31 L377.0 571.72 L378.0 566.87 L379.0 561.79 L380.0 556.49 L381.0 550.99 L382.0 545.30 L383.0 539.45 L384.0 533.45 L385.0 527.32 L386.0 521.08 L387.0 514.76 L388.0 508.36 L389.0 501.92 L390.0 495.45 L391.0 488.98 L392.0 482.51 L393.0 476.09 L394.0 469.71 L395.0 463.42 L396.0 457.22 L397.0 451.13 L398.0 445.18 L399.0 439.38 L400.0 433.76 L401.0 428.32 L402.0 423.10 L403.0 418.10 L404.0 413.34 L405.0 408.83 L406.0 404.60 L407.0 400.65 L408.0 396.99 L409.0 393.65 L410.0 390.62 L411.0 387.92 L412.0 385.56 L413.0 383.54 L414.0 381.88 L415.0 380.57 L416.0 379.62 L417.0 379.03 L418.0 378.81 L419.0 378.96 L420.0 379.47 L421.0 380.35 L422.0 381.59 L423.0 383.18 L424.0 385.13 L425.0 387.42 L426.0 390.05 L427.0 393.02 L428.0 396.30 L429.0 399.89 L430.0 403.79 L431.0 407.96 L432.0 412.42 L433.0 417.13 L434.0 422.08 L435.0 427.26 L436.0 432.66 L437.0 438.24 L438.0 444.01 L439.0 449.93 L440.0 455.99 L441.0 462.17 L442.0 468.45 L443.0 474.81 L444.0 481.22 L445.0 487.68 L446.0 494.16 L447.0 500.63 L448.0 507.08 L449.0 513.48 L450.0 519.82 L451.0 526.08 L452.0 532.23 L453.0 538.26 L454.0 544.14 L455.0 549.86 L456.0 555.40 L457.0 560.75 L458.0 565.87 L459.0 570.77 L460.0 575.42 L461.0 579.80 L462.0 583.91 L463.0 587.73 L464.0 591.24 L465.0 594.45 L466.0 597.33 L467.0 599.88 L468.0 602.08 L469.0 603.94 L470.0 605.45 L471.0 606.60 L472.0 607.38 L473.0 607.80 L474.0 607.86 L475.0 607.55 L476.0 606.87 L477.0 605.83 L478.0 604.43 L479.0 602.68 L480.0 600.57 L481.0 598.13 L482.0 595.35 L483.0 592.24 L484.0 588.81 L485.0 585.08 L486.0 581.06 L487.0 576.76 L488.0 572.19 L489.0 567.37 L490.0 562.31 L491.0 557.03 L492.0 551.55 L493.0 545.88 L494.0 540.04 L495.0 534.05 L496.0 527.94 L497.0 521.71 L498.0 515.39 L499.0 509.01 L500.0 502.57 L501.0 496.10 L502.0 489.62 L503.0 483.16 L504.0 476.73 L505.0 470.35 L506.0 464.04 L507.0 457.83 L508.0 451.73 L509.0 445.77 L510.0 439.95 L511.0 434.31 L512.0 428.86 L513.0 423.61 L514.0 418.59 L515.0 413.80 L516.0 409.27 L517.0 405.01 L518.0 401.03 L519.0 397.35 L520.0 393.97 L521.0 390.91 L522.0 388.18 L523.0 385.78 L524.0 383.73 L525.0 382.03 L526.0 380.68 L527.0 379.70 L528.0 379.08 L529.0 378.82 L530.0 378.93 L531.0 379.41 L532.0 380.25 L533.0 381.45 L534.0 383.01 L535.0 384.92 L536.0 387.18 L537.0 389.78 L538.0 392.71 L539.0 395.96 L540.0 399.52 L541.0 403.38 L542.0 407.53 L543.0 411.96 L544.0 416.64 L545.0 421.57 L546.0 426.73 L547.0 432.11 L548.0 437.68 L549.0 443.42 L550.0 449.33 L551.0 455.38 L552.0 461.55 L553.0 467.82 L554.0 474.17 L555.0 480.58 L556.0 487.03 L557.0 493.51 L558.0 499.98 L559.0 506.43 L560.0 512.85 L561.0 519.19 L562.0 525.46 L563.0 531.62 L564.0 537.66 L565.0 543.56 L566.0 549.30 L567.0 554.86 L568.0 560.22 L569.0 565.37 L570.0 570.29 L571.0 574.96 L572.0 579.37 L573.0 583.51 L574.0 587.36 L575.0 590.91 L576.0 594.14 L577.0 597.05 L578.0 599.64 L579.0 601.88 L580.0 603.77 L581.0 605.31 L582.0 606.50 L583.0 607.32 L584.0 607.78 L585.0 607.87 L586.0 607.59 L587.0 606.95 L588.0 605.95 L589.0 604.59 L590.0 602.87 L591.0 600.80 L592.0 598.39 L593.0 595.64 L594.0 592.56 L595.0 589.17 L596.0 585.47 L597.0 581.48 L598.0 577.20 L599.0 572.66 L600.0 567.86 L601.0 562.82 L602.0 557.57 L603.0 552.10 L604.0 546.45 L605.0 540.63 L606.0 534.66 L607.0 528.55 L608.0 522.34 L609.0 516.03 L610.0 509.65 L611.0 503.21 L612.0 496.75 L613.0 490.27 L614.0 483.80 L615.0 477.37 L616.0 470.98 L617.0 464.67 L618.0 458.45 L619.0 452.34 L620.0 446.36 L621.0 440.53 L622.0 434.87 L623.0 429.40 L624.0 424.13 L625.0 419.08 L626.0 414.27 L627.0 409.71 L628.0 405.42 L629.0 401.42 L630.0 397.70 L631.0 394.29 L632.0 391.20 L633.0 388.44 L634.0 386.01 L635.0 383.92 L636.0 382.18 L637.0 380.80 L638.0 379.78 L639.0 379.12 L640.0 378.83 L641.0 378.90 L642.0 379.34 L643.0 380.15 L644.0 381.31 L645.0 382.83 L646.0 384.71 L647.0 386.94 L648.0 389.50 L649.0 392.40 L650.0 395.62 L651.0 399.15 L652.0 402.98 L653.0 407.11 L654.0 411.50 L655.0 416.16 L656.0 421.07 L657.0 426.21 L658.0 431.56 L659.0 437.11 L660.0 442.84 L661.0 448.73 L662.0 454.77 L663.0 460.92 L664.0 467.18 L665.0 473.53 L666.0 479.94 L667.0 486.39 L668.0 492.86 L669.0 499.34 L670.0 505.79 L671.0 512.21 L672.0 518.56 L673.0 524.84 L674.0 531.01 L675.0 537.06 L676.0 542.98 L677.0 548.73 L678.0 554.31 L679.0 559.70 L680.0 564.87 L681.0 569.81 L682.0 574.51 L683.0 578.94 L684.0 583.11 L685.0 586.99 L686.0 590.56 L687.0 593.83 L688.0 596.78 L689.0 599.39 L690.0 601.67 L691.0 603.60 L692.0 605.18 L693.0 606.40 L694.0 607.25 L695.0 607.75 L696.0 607.88 L697.0 607.64 L698.0 607.04 L699.0 606.07 L700.0 604.74 L701.0 603.06 L702.0 601.02 L703.0 598.64 L704.0 595.93 L705.0 592.89 L706.0 589.52 L707.0 585.85 L708.0 581.89 L709.0 577.64 L710.0 573.12 L711.0 568.35 L712.0 563.34 L713.0 558.10 L714.0 552.66 L715.0 547.03 L716.0 541.22 L717.0 535.26 L718.0 529.17 L719.0 522.96 L720.0 516.66 L721.0 510.29 L722.0 503.86 L723.0 497.39 L724.0 490.92 L725.0 484.45 L726.0 478.01 L727.0 471.62 L728.0 465.30 L729.0 459.06 L730.0 452.94 L731.0 446.95 L732.0 441.10 L733.0 435.43 L734.0 429.93 L735.0 424.64 L736.0 419.57 L737.0 414.74 L738.0 410.16 L739.0 405.84 L740.0 401.80 L741.0 398.06 L742.0 394.62 L743.0 391.50 L744.0 388.70 L745.0 386.23 L746.0 384.11 L747.0 382.34 L748.0 380.92 L749.0 379.87 L750.0 379.17 L751.0 378.84 L752.0 378.88 L753.0 379.28 L754.0 380.05 L755.0 381.18 L756.0 382.67 L757.0 384.51 L758.0 386.70 L759.0 389.23 L760.0 392.09 L761.0 395.28 L762.0 398.78 L763.0 402.59 L764.0 406.68 L765.0 411.05 L766.0 415.69 L767.0 420.57 L768.0 425.68 L769.0 431.02 L770.0 436.55 L771.0 442.26 L772.0 448.14 L773.0 454.16 L774.0 460.30 L775.0 466.55 L776.0 472.89 L777.0 479.29 L778.0 485.74 L779.0 492.21 L780.0 498.69 L781.0 505.15 L782.0 511.57 L783.0 517.93 L784.0 524.21 L785.0 530.40 L786.0 536.47 L787.0 542.39 L788.0 548.17 L789.0 553.76 L790.0 559.17 L791.0 564.36 L792.0 569.32 L793.0 574.05 L794.0 578.51 L795.0 582.71 L796.0 586.61 L797.0 590.22 L798.0 593.52 L799.0 596.50 L800.0 599.15 L801.0 601.46 L802.0 603.42 L803.0 605.03 L804.0 606.29 L805.0 607.19 L806.0 607.72 L807.0 607.88 L808.0 607.68 L809.0 607.11 L810.0 606.18 L811.0 604.89 L812.0 603.24 L813.0 601.24 L814.0 598.90 L815.0 596.22 L816.0 593.20 L817.0 589.87 L818.0 586.23 L819.0 582.30 L820.0 578.08 L821.0 573.59 L822.0 568.84 L823.0 563.85 L824.0 558.63 L825.0 553.21 L826.0 547.60 L827.0 541.81 L828.0 535.86 L829.0 529.79 L830.0 523.59 L831.0 517.30 L832.0 510.93 L833.0 504.50 L834.0 498.04 L835.0 491.57 L836.0 485.10 L837.0 478.65 L838.0 472.25 L839.0 465.92 L840.0 459.68 L841.0 453.55 L842.0 447.54 L843.0 441.68 L844.0 435.99 L845.0 430.47 L846.0 425.16 L847.0 420.07 L848.0 415.21 L849.0 410.60 L850.0 406.26 L851.0 402.19 L852.0 398.42 L853.0 394.95 L854.0 391.79 L855.0 388.96 L856.0 386.46 L857.0 384.31 L858.0 382.50 L859.0 381.05 L860.0 379.96 L861.0 379.22 L862.0 378.86 L863.0 378.86 L864.0 379.22 L865.0 379.96 L866.0 381.05 L867.0 382.50 L868.0 384.31 L869.0 386.46 L870.0 388.96 L871.0 391.79 L872.0 394.95 L873.0 398.42 L874.0 402.19 L875.0 406.26 L876.0 410.60 L877.0 415.21 L878.0 420.07 L879.0 425.16 L880.0 430.47 L881.0 435.99 L882.0 441.68 L883.0 447.54 L884.0 453.55 L885.0 459.68 L886.0 465.92 L887.0 472.25 L888.0 478.65 L889.0 485.10 L890.0 491.57 L891.0 498.04 L892.0 504.50 L893.0 510.93 L894.0 517.30 L895.0 523.59 L896.0 529.79 L897.0 535.86 L898.0 541.81 L899.0 547.60 L900.0 553.21 L901.0 558.63 L902.0 563.85 L903.0 568.84 L904.0 573.59 L905.0 578.08 L906.0 582.30 L907.0 586.23 L908.0 589.87 L909.0 593.20 L910.0 596.22 L911.0 598.90 L912.0 601.24 L913.0 603.24 L914.0 604.89 L915.0 606.18 L916.0 607.11 L917.0 607.68 L918.0 607.88 L919.0 607.72 L920.0 607.19 L921.0 606.29 L922.0 605.03 L923.0 603.42 L924.0 601.46 L925.0 599.15 L926.0 596.50 L927.0 593.52 L928.0 590.22 L929.0 586.61 L930.0 582.71 L931.0 578.51 L932.0 574.05 L933.0 569.32 L934.0 564.36 L935.0 559.17 L936.0 553.76 L937.0 548.17 L938.0 542.39 L939.0 536.47 L940.0 530.40 L941.0 524.21 L942.0 517.93 L943.0 511.57 L944.0 505.15 L945.0 498.69 L946.0 492.21 L947.0 485.74 L948.0 479.29 L949.0 472.89 L950.0 466.55 L951.0 460.30 L952.0 454.16 L953.0 448.14 L954.0 442.26 L955.0 436.55 L956.0 431.02 L957.0 425.68 L958.0 420.57 L959.0 415.69 L960.0 411.05 L961.0 406.68" fill="none" stroke="#1F77B4" stroke-width="2" stroke-linejoin="round"/><path d="M280.0 646.76 L281.0 646.05 L282.0 645.37 L283.0 644.75 L284.0 644.20 L285.0 643.74 L286.0 643.38 L287.0 643.14 L288.0 643.02 L289.0 643.02 L290.0 643.14 L291.0 643.38 L292.0 643.74 L293.0 644.20 L294.0 644.75 L295.0 645.37 L296.0 646.05 L297.0 646.76 L298.0 647.49 L299.0 648.22 L300.0 648.91 L301.0 649.57 L302.0 650.15 L303.0 650.65 L304.0 651.06 L305.0 651.36 L306.0 651.54 L307.0 651.60 L308.0 651.53 L309.0 651.35 L310.0 651.04 L311.0 650.63 L312.0 650.12 L313.0 649.53 L314.0 648.88 L315.0 648.18 L316.0 647.46 L317.0 646.73 L318.0 646.01 L319.0 645.34 L320.0 644.72 L321.0 644.17 L322.0 643.72 L323.0 643.37 L324.0 643.13 L325.0 643.01 L326.0 643.02 L327.0 643.15 L328.0 643.40 L329.0 643.76 L330.0 644.22 L331.0 644.78 L332.0 645.40 L333.0 646.08 L334.0 646.80 L335.0 647.53 L336.0 648.25 L337.0 648.95 L338.0 649.60 L339.0 650.18 L340.0 650.68 L341.0 651.08 L342.0 651.37 L343.0 651.55 L344.0 651.60 L345.0 651.53 L346.0 651.34 L347.0 651.03 L348.0 650.61 L349.0 650.10 L350.0 649.50 L351.0 648.85 L352.0 648.14 L353.0 647.42 L354.0 646.69 L355.0 645.98 L356.0 645.30 L357.0 644.69 L358.0 644.15 L359.0 643.70 L360.0 643.35 L361.0 643.12 L362.0 643.01 L363.0 643.02 L364.0 643.16 L365.0 643.41 L366.0 643.78 L367.0 644.25 L368.0 644.81 L369.0 645.44 L370.0 646.12 L371.0 646.83 L372.0 647.56 L373.0 648.29 L374.0 648.98 L375.0 649.63 L376.0 650.21 L377.0 650.70 L378.0 651.10 L379.0 651.38 L380.0 651.55 L381.0 651.60 L382.0 651.52 L383.0 651.32 L384.0 651.01 L385.0 650.58 L386.0 650.07 L387.0 649.47 L388.0 648.81 L389.0 648.11 L390.0 647.38 L391.0 646.65 L392.0 645.94 L393.0 645.27 L394.0 644.66 L395.0 644.12 L396.0 643.68 L397.0 643.34 L398.0 643.11 L399.0 643.01 L400.0 643.03 L401.0 643.17 L402.0 643.43 L403.0 643.80 L404.0 644.28 L405.0 644.84 L406.0 645.47 L407.0 646.15 L408.0 646.87 L409.0 647.60 L410.0 648.32 L411.0 649.01 L412.0 649.66 L413.0 650.23 L414.0 650.72 L415.0 651.11 L416.0 651.39 L417.0 651.56 L418.0 651.60 L419.0 651.51 L420.0 651.31 L421.0 650.99 L422.0 650.56 L423.0 650.04 L424.0 649.44 L425.0 648.78 L426.0 648.07 L427.0 647.35 L428.0 646.62 L429.0 645.91 L430.0 645.24 L431.0 644.63 L432.0 644.10 L433.0 643.66 L434.0 643.32 L435.0 643.10 L436.0 643.01 L437.0 643.03 L438.0 643.18 L439.0 643.45 L440.0 643.82 L441.0 644.30 L442.0 644.87 L443.0 645.50 L444.0 646.19 L445.0 646.91 L446.0 647.64 L447.0 648.36 L448.0 649.05 L449.0 649.69 L450.0 650.26 L451.0 650.74 L452.0 651.13 L453.0 651.41 L454.0 651.56 L455.0 651.60 L456.0 651.51 L457.0 651.30 L458.0 650.97 L459.0 650.54 L460.0 650.01 L461.0 649.41 L462.0 648.74 L463.0 648.04 L464.0 647.31 L465.0 646.58 L466.0 645.87 L467.0 645.21 L468.0 644.60 L469.0 644.07 L470.0 643.64 L471.0 643.31 L472.0 643.10 L473.0 643.00 L474.0 643.03 L475.0 643.19 L476.0 643.46 L477.0 643.85 L478.0 644.33 L479.0 644.90 L480.0 645.53 L481.0 646.22 L482.0 646.94 L483.0 647.67 L484.0 648.39 L485.0 649.08 L486.0 649.72 L487.0 650.29 L488.0 650.77 L489.0 651.15 L490.0 651.42 L491.0 651.57 L492.0 651.60 L493.0 651.50 L494.0 651.28 L495.0 650.95 L496.0 650.51 L497.0 649.98 L498.0 649.38 L499.0 648.71 L500.0 648.00 L501.0 647.27 L502.0 646.55 L503.0 645.84 L504.0 645.18 L505.0 644.57 L506.0 644.05 L507.0 643.62 L508.0 643.30 L509.0 643.09 L510.0 643.00 L511.0 643.04 L512.0 643.20 L513.0 643.48 L514.0 643.87 L515.0 644.35 L516.0 644.93 L517.0 645.57 L518.0 646.26 L519.0 646.98 L520.0 647.71 L521.0 648.43 L522.0 649.11 L523.0 649.75 L524.0 650.31 L525.0 650.79 L526.0 651.16 L527.0 651.43 L528.0 651.57 L529.0 651.59 L530.0 651.49 L531.0 651.27 L532.0 650.93 L533.0 650.49 L534.0 649.95 L535.0 649.34 L536.0 648.67 L537.0 647.96 L538.0 647.24 L539.0 646.51 L540.0 645.81 L541.0 645.14 L542.0 644.55 L543.0 644.03 L544.0 643.60 L545.0 643.28 L546.0 643.08 L547.0 643.00 L548.0 643.04 L549.0 643.21 L550.0 643.50 L551.0 643.89 L552.0 644.38 L553.0 644.96 L554.0 645.60 L555.0 646.29 L556.0 647.02 L557.0 647.75 L558.0 648.46 L559.0 649.15 L560.0 649.78 L561.0 650.34 L562.0 650.81 L563.0 651.18 L564.0 651.44 L565.0 651.58 L566.0 651.59 L567.0 651.48 L568.0 651.25 L569.0 650.91 L570.0 650.46 L571.0 649.93 L572.0 649.31 L573.0 648.64 L574.0 647.93 L575.0 647.20 L576.0 646.47 L577.0 645.77 L578.0 645.11 L579.0 644.52 L580.0 644.00 L581.0 643.58 L582.0 643.27 L583.0 643.08 L584.0 643.00 L585.0 643.05 L586.0 643.22 L587.0 643.51 L588.0 643.91 L589.0 644.41 L590.0 644.99 L591.0 645.64 L592.0 646.33 L593.0 647.05 L594.0 647.78 L595.0 648.50 L596.0 649.18 L597.0 649.81 L598.0 650.36 L599.0 650.83 L600.0 651.19 L601.0 651.45 L602.0 651.58 L603.0 651.59 L604.0 651.47 L605.0 651.24 L606.0 650.89 L607.0 650.44 L608.0 649.90 L609.0 649.28 L610.0 648.60 L611.0 647.89 L612.0 647.16 L613.0 646.44 L614.0 645.74 L615.0 645.08 L616.0 644.49 L617.0 643.98 L618.0 643.57 L619.0 643.26 L620.0 643.07 L621.0 643.00 L622.0 643.06 L623.0 643.23 L624.0 643.53 L625.0 643.93 L626.0 644.44 L627.0 645.02 L628.0 645.67 L629.0 646.37 L630.0 647.09 L631.0 647.82 L632.0 648.53 L633.0 649.21 L634.0 649.84 L635.0 650.39 L636.0 650.85 L637.0 651.21 L638.0 651.46 L639.0 651.58 L640.0 651.59 L641.0 651.47 L642.0 651.22 L643.0 650.87 L644.0 650.41 L645.0 649.87 L646.0 649.25 L647.0 648.57 L648.0 647.86 L649.0 647.13 L650.0 646.40 L651.0 645.70 L652.0 645.05 L653.0 644.46 L654.0 643.96 L655.0 643.55 L656.0 643.25 L657.0 643.06 L658.0 643.00 L659.0 643.06 L660.0 643.25 L661.0 643.55 L662.0 643.96 L663.0 644.46 L664.0 645.05 L665.0 645.70 L666.0 646.40 L667.0 647.13 L668.0 647.86 L669.0 648.57 L670.0 649.25 L671.0 649.87 L672.0 650.41 L673.0 650.87 L674.0 651.22 L675.0 651.47 L676.0 651.59 L677.0 651.58 L678.0 651.46 L679.0 651.21 L680.0 650.85 L681.0 650.39 L682.0 649.84 L683.0 649.21 L684.0 648.53 L685.0 647.82 L686.0 647.09 L687.0 646.37 L688.0 645.67 L689.0 645.02 L690.0 644.44 L691.0 643.93 L692.0 643.53 L693.0 643.23 L694.0 643.06 L695.0 643.00 L696.0 643.07 L697.0 643.26 L698.0 643.57 L699.0 643.98 L700.0 644.49 L701.0 645.08 L702.0 645.74 L703.0 646.44 L704.0 647.16 L705.0 647.89 L706.0 648.60 L707.0 649.28 L708.0 649.90 L709.0 650.44 L710.0 650.89 L711.0 651.24 L712.0 651.47 L713.0 651.59 L714.0 651.58 L715.0 651.45 L716.0 651.19 L717.0 650.83 L718.0 650.36 L719.0 649.81 L720.0 649.18 L721.0 648.50 L722.0 647.78 L723.0 647.05 L724.0 646.33 L725.0 645.64 L726.0 644.99 L727.0 644.41 L728.0 643.91 L729.0 643.51 L730.0 643.22 L731.0 643.05 L732.0 643.00 L733.0 643.08 L734.0 643.27 L735.0 643.58 L736.0 644.00 L737.0 644.52 L738.0 645.11 L739.0 645.77 L740.0 646.47 L741.0 647.20 L742.0 647.93 L743.0 648.64 L744.0 649.31 L745.0 649.93 L746.0 650.46 L747.0 650.91 L748.0 651.25 L749.0 651.48 L750.0 651.59 L751.0 651.58 L752.0 651.44 L753.0 651.18 L754.0 650.81 L755.0 650.34 L756.0 649.78 L757.0 649.15 L758.0 648.46 L759.0 647.75 L760.0 647.02 L761.0 646.29 L762.0 645.60 L763.0 644.96 L764.0 644.38 L765.0 643.89 L766.0 643.50 L767.0 643.21 L768.0 643.04 L769.0 643.00 L770.0 643.08 L771.0 643.28 L772.0 643.60 L773.0 644.03 L774.0 644.55 L775.0 645.14 L776.0 645.81 L777.0 646.51 L778.0 647.24 L779.0 647.96 L780.0 648.67 L781.0 649.34 L782.0 649.95 L783.0 650.49 L784.0 650.93 L785.0 651.27 L786.0 651.49 L787.0 651.59 L788.0 651.57 L789.0 651.43 L790.0 651.16 L791.0 650.79 L792.0 650.31 L793.0 649.75 L794.0 649.11 L795.0 648.43 L796.0 647.71 L797.0 646.98 L798.0 646.26 L799.0 645.57 L800.0 644.93 L801.0 644.35 L802.0 643.87 L803.0 643.48 L804.0 643.20 L805.0 643.04 L806.0 643.00 L807.0 643.09 L808.0 643.30 L809.0 643.62 L810.0 644.05 L811.0 644.57 L812.0 645.18 L813.0 645.84 L814.0 646.55 L815.0 647.27 L816.0 648.00 L817.0 648.71 L818.0 649.38 L819.0 649.98 L820.0 650.51 L821.0 650.95 L822.0 651.28 L823.0 651.50 L824.0 651.60 L825.0 651.57 L826.0 651.42 L827.0 651.15 L828.0 650.77 L829.0 650.29 L830.0 649.72 L831.0 649.08 L832.0 648.39 L833.0 647.67 L834.0 646.94 L835.0 646.22 L836.0 645.53 L837.0 644.90 L838.0 644.33 L839.0 643.85 L840.0 643.46 L841.0 643.19 L842.0 643.03 L843.0 643.00 L844.0 643.10 L845.0 643.31 L846.0 643.64 L847.0 644.07 L848.0 644.60 L849.0 645.21 L850.0 645.87 L851.0 646.58 L852.0 647.31 L853.0 648.04 L854.0 648.74 L855.0 649.41 L856.0 650.01 L857.0 650.54 L858.0 650.97 L859.0 651.30 L860.0 651.51 L861.0 651.60 L862.0 651.56 L863.0 651.41 L864.0 651.13 L865.0 650.74 L866.0 650.26 L867.0 649.69 L868.0 649.05 L869.0 648.36 L870.0 647.64 L871.0 646.91 L872.0 646.19 L873.0 645.50 L874.0 644.87 L875.0 644.30 L876.0 643.82 L877.0 643.45 L878.0 643.18 L879.0 643.03 L880.0 643.01 L881.0 643.10 L882.0 643.32 L883.0 643.66 L884.0 644.10 L885.0 644.63 L886.0 645.24 L887.0 645.91 L888.0 646.62 L889.0 647.35 L890.0 648.07 L891.0 648.78 L892.0 649.44 L893.0 650.04 L894.0 650.56 L895.0 650.99 L896.0 651.31 L897.0 651.51 L898.0 651.60 L899.0 651.56 L900.0 651.39 L901.0 651.11 L902.0 650.72 L903.0 650.23 L904.0 649.66 L905.0 649.01 L906.0 648.32 L907.0 647.60 L908.0 646.87 L909.0 646.15 L910.0 645.47 L911.0 644.84 L912.0 644.28 L913.0 643.80 L914.0 643.43 L915.0 643.17 L916.0 643.03 L917.0 643.01 L918.0 643.11 L919.0 643.34 L920.0 643.68 L921.0 644.12 L922.0 644.66 L923.0 645.27 L924.0 645.94 L925.0 646.65 L926.0 647.38 L927.0 648.11 L928.0 648.81 L929.0 649.47 L930.0 650.07 L931.0 650.58 L932.0 651.01 L933.0 651.32 L934.0 651.52 L935.0 651.60 L936.0 651.55 L937.0 651.38 L938.0 651.10 L939.0 650.70 L940.0 650.21 L941.0 649.63 L942.0 648.98 L943.0 648.29 L944.0 647.56 L945.0 646.83 L946.0 646.12 L947.0 645.44 L948.0 644.81 L949.0 644.25 L950.0 643.78 L951.0 643.41 L952.0 643.16 L953.0 643.02 L954.0 643.01 L955.0 643.12 L956.0 643.35 L957.0 643.70 L958.0 644.15 L959.0 644.69 L960.0 645.30 L961.0 645.98" fill="none" stroke="#D62728" stroke-width="2" stroke-linejoin="round"/><path d="M280.0 779 L287.5 779 L287.5 757 L302.7 757 L302.7 779 L320.9 779 L320.9 757 L336.1 757 L336.1 779 L354.2 779 L354.2 757 L369.4 757 L369.4 779 L387.6 779 L387.6 757 L402.8 757 L402.8 779 L421.0 779 L421.0 757 L436.2 757 L436.2 779 L454.4 779 L454.4 757 L469.6 757 L469.6 779 L487.7 779 L487.7 757 L502.9 757 L502.9 779 L521.1 779 L521.1 757 L536.3 757 L536.3 779 L554.5 779 L554.5 757 L569.7 757 L569.7 779 L587.8 779 L587.8 757 L603.0 757 L603.0 779 L621.2 779 L621.2 757 L636.4 757 L636.4 779 L654.6 779 L654.6 757 L669.8 757 L669.8 779 L687.9 779 L687.9 757 L703.1 757 L703.1 779 L721.3 779 L721.3 757 L736.5 757 L736.5 779 L754.7 779 L754.7 757 L769.9 757 L769.9 779 L788.0 779 L788.0 757 L803.2 757 L803.2 779 L821.4 779 L821.4 757 L836.6 757 L836.6 779 L854.8 779 L854.8 757 L870.0 757 L870.0 779 L888.2 779 L888.2 757 L903.4 757 L903.4 779 L921.5 779 L921.5 757 L936.7 757 L936.7 779 L954.9 779 L954.9 757 L961.0 757" fill="none" stroke="#BCBD22" stroke-width="2" stroke-linejoin="miter" stroke-linecap="butt"/><path d="M280.0 806.3 L286.9 806.3 L286.9 785 L290.3 785 L290.3 806.3 L309.0 806.3 L309.0 785 L319.8 785 L319.8 806.3 L327.6 806.3 L327.6 785 L330.8 785 L330.8 806.3 L339.2 806.3 L339.2 785 L341.5 785 L341.5 806.3 L346.3 806.3 L346.3 785 L350.0 785 L350.0 806.3 L361.0 806.3 L361.0 785 L372.0 785 L372.0 806.3 L379.2 806.3 L379.2 785 L387.1 785 L387.1 806.3 L394.2 806.3 L394.2 785 L409.1 785 L409.1 806.3 L419.9 806.3 L419.9 785 L434.9 785 L434.9 806.3 L453.8 806.3 L453.8 785 L456.9 785 L456.9 806.3 L465.3 806.3 L465.3 785 L468.4 785 L468.4 806.3 L498.1 806.3 L498.1 785 L513.0 785 L513.0 806.3 L527.8 806.3 L527.8 785 L538.8 785 L538.8 806.3 L545.9 806.3 L545.9 785 L553.5 785 L553.5 806.3 L557.1 806.3 L557.1 785 L561.0 785 L561.0 806.3 L583.1 806.3 L583.1 785 L586.8 785 L586.8 806.3 L594.4 806.3 L594.4 785 L602.0 785 L602.0 806.3 L605.1 806.3 L605.1 785 L609.1 785 L609.1 806.3 L619.9 806.3 L619.9 785 L623.8 785 L623.8 806.3 L635.1 806.3 L635.1 785 L642.7 785 L642.7 806.3 L672.0 806.3 L672.0 785 L675.7 785 L675.7 806.3 L679.4 806.3 L679.4 785 L694.4 785 L694.4 806.3 L712.7 806.3 L712.7 785 L720.1 785 L720.1 806.3 L724.0 806.3 L724.0 785 L727.7 785 L727.7 806.3 L738.7 806.3 L738.7 785 L757.0 785 L757.0 806.3 L761.0 806.3 L761.0 785 L764.4 785 L764.4 806.3 L772.0 806.3 L772.0 785 L775.7 785 L775.7 806.3 L787.2 806.3 L787.2 785 L790.7 785 L790.7 806.3 L798.0 806.3 L798.0 785 L805.4 785 L805.4 806.3 L809.0 806.3 L809.0 785 L820.3 785 L820.3 806.3 L823.9 806.3 L823.9 785 L827.9 785 L827.9 806.3 L831.0 806.3 L831.0 785 L835.0 785 L835.0 806.3 L850.0 806.3 L850.0 785 L853.9 785 L853.9 806.3 L861.2 806.3 L861.2 785 L865.0 785 L865.0 806.3 L868.6 806.3 L868.6 785 L872.3 785 L872.3 806.3 L876.0 806.3 L876.0 785 L890.9 785 L890.9 806.3 L898.0 806.3 L898.0 785 L905.6 785 L905.6 806.3 L916.5 806.3 L916.5 785 L924.2 785 L924.2 806.3 L927.3 806.3 L927.3 785 L931.0 785 L931.0 806.3 L950.5 806.3 L950.5 785 L953.6 785 L953.6 806.3 L961.0 806.3" fill="none" stroke="#FFBB78" stroke-width="2" stroke-linejoin="miter" stroke-linecap="butt"/><line x1="280.0" y1="833.5" x2="961.0" y2="833.5" stroke="#C5B0D5" stroke-width="2"/><text x="281" y="778" font-family="'Liberation Sans', sans-serif" font-size="13" fill="#a8a8a8" letter-spacing="0.2">Schleuse P102</text><text x="281" y="805" font-family="'Liberation Sans', sans-serif" font-size="13" fill="#a8a8a8" letter-spacing="0.25">Luftbefeuchtung</text><text x="281" y="832" font-family="'Liberation Sans', sans-serif" font-size="13" fill="#a8a8a8" letter-spacing="0.3">Sterilisation</text><rect x="417" y="291.0" width="47.5" height="543.0" fill="rgba(110,110,110,0.19)"/><circle cx="435.3" cy="642.9" r="9.7" fill="rgba(82,227,194,0.5)"/><circle cx="435.3" cy="642.9" r="5.6" fill="rgba(200,250,235,0.55)"/><circle cx="435.3" cy="642.9" r="4" fill="#50E2C0"/><line x1="138" y1="290.5" x2="138" y2="726.0" stroke="#000" stroke-width="2"/><line x1="133" y1="725.5" x2="138" y2="725.5" stroke="#000" stroke-width="1"/><text x="127" y="729.4" font-family="'Liberation Sans', sans-serif" font-size="13" fill="#111" text-anchor="end" letter-spacing="0.1">0</text><line x1="133" y1="682.5" x2="138" y2="682.5" stroke="#000" stroke-width="1"/><text x="127" y="685.9" font-family="'Liberation Sans', sans-serif" font-size="13" fill="#111" text-anchor="end" letter-spacing="0.1">10</text><line x1="133" y1="638.5" x2="138" y2="638.5" stroke="#000" stroke-width="1"/><text x="127" y="642.5" font-family="'Liberation Sans', sans-serif" font-size="13" fill="#111" text-anchor="end" letter-spacing="0.1">20</text><line x1="133" y1="595.5" x2="138" y2="595.5" stroke="#000" stroke-width="1"/><text x="127" y="599.0" font-family="'Liberation Sans', sans-serif" font-size="13" fill="#111" text-anchor="end" letter-spacing="0.1">30</text><line x1="133" y1="551.5" x2="138" y2="551.5" stroke="#000" stroke-width="1"/><text x="127" y="555.6" font-family="'Liberation Sans', sans-serif" font-size="13" fill="#111" text-anchor="end" letter-spacing="0.1">40</text><line x1="133" y1="508.5" x2="138" y2="508.5" stroke="#000" stroke-width="1"/><text x="127" y="512.1" font-family="'Liberation Sans', sans-serif" font-size="13" fill="#111" text-anchor="end" letter-spacing="0.1">50</text><line x1="133" y1="464.5" x2="138" y2="464.5" stroke="#000" stroke-width="1"/><text x="127" y="468.7" font-family="'Liberation Sans', sans-serif" font-size="13" fill="#111" text-anchor="end" letter-spacing="0.1">60</text><line x1="133" y1="421.5" x2="138" y2="421.5" stroke="#000" stroke-width="1"/><text x="127" y="425.2" font-family="'Liberation Sans', sans-serif" font-size="13" fill="#111" text-anchor="end" letter-spacing="0.1">70</text><line x1="133" y1="377.5" x2="138" y2="377.5" stroke="#000" stroke-width="1"/><text x="127" y="381.8" font-family="'Liberation Sans', sans-serif" font-size="13" fill="#111" text-anchor="end" letter-spacing="0.1">80</text><line x1="133" y1="334.5" x2="138" y2="334.5" stroke="#000" stroke-width="1"/><text x="127" y="338.4" font-family="'Liberation Sans', sans-serif" font-size="13" fill="#111" text-anchor="end" letter-spacing="0.1">90</text><line x1="133" y1="290.5" x2="138" y2="290.5" stroke="#000" stroke-width="1"/><text x="127" y="294.9" font-family="'Liberation Sans', sans-serif" font-size="13" fill="#111" text-anchor="end" letter-spacing="0.1">100</text><line x1="209" y1="290.5" x2="209" y2="726.0" stroke="#000" stroke-width="2"/><line x1="204" y1="725.5" x2="209" y2="725.5" stroke="#000" stroke-width="1"/><text x="197.5" y="729.4" font-family="'Liberation Sans', sans-serif" font-size="13" fill="#111" text-anchor="end" letter-spacing="0.1">0</text><line x1="204" y1="696.5" x2="209" y2="696.5" stroke="#000" stroke-width="1"/><text x="197.5" y="700.4" font-family="'Liberation Sans', sans-serif" font-size="13" fill="#111" text-anchor="end" letter-spacing="0.1">100</text><line x1="204" y1="667.5" x2="209" y2="667.5" stroke="#000" stroke-width="1"/><text x="197.5" y="671.5" font-family="'Liberation Sans', sans-serif" font-size="13" fill="#111" text-anchor="end" letter-spacing="0.1">200</text><line x1="204" y1="638.5" x2="209" y2="638.5" stroke="#000" stroke-width="1"/><text x="197.5" y="642.5" font-family="'Liberation Sans', sans-serif" font-size="13" fill="#111" text-anchor="end" letter-spacing="0.1">300</text><line x1="204" y1="609.5" x2="209" y2="609.5" stroke="#000" stroke-width="1"/><text x="197.5" y="613.5" font-family="'Liberation Sans', sans-serif" font-size="13" fill="#111" text-anchor="end" letter-spacing="0.1">400</text><line x1="204" y1="580.5" x2="209" y2="580.5" stroke="#000" stroke-width="1"/><text x="197.5" y="584.5" font-family="'Liberation Sans', sans-serif" font-size="13" fill="#111" text-anchor="end" letter-spacing="0.1">500</text><line x1="204" y1="551.5" x2="209" y2="551.5" stroke="#000" stroke-width="1"/><text x="197.5" y="555.6" font-family="'Liberation Sans', sans-serif" font-size="13" fill="#111" text-anchor="end" letter-spacing="0.1">600</text><line x1="204" y1="522.5" x2="209" y2="522.5" stroke="#000" stroke-width="1"/><text x="197.5" y="526.6" font-family="'Liberation Sans', sans-serif" font-size="13" fill="#111" text-anchor="end" letter-spacing="0.1">700</text><line x1="204" y1="493.5" x2="209" y2="493.5" stroke="#000" stroke-width="1"/><text x="197.5" y="497.6" font-family="'Liberation Sans', sans-serif" font-size="13" fill="#111" text-anchor="end" letter-spacing="0.1">800</text><line x1="204" y1="464.5" x2="209" y2="464.5" stroke="#000" stroke-width="1"/><text x="197.5" y="468.7" font-family="'Liberation Sans', sans-serif" font-size="13" fill="#111" text-anchor="end" letter-spacing="0.1">900</text><line x1="204" y1="435.5" x2="209" y2="435.5" stroke="#000" stroke-width="1"/><text x="197.5" y="439.7" font-family="'Liberation Sans', sans-serif" font-size="13" fill="#111" text-anchor="end" letter-spacing="0.1">1000</text><line x1="204" y1="406.5" x2="209" y2="406.5" stroke="#000" stroke-width="1"/><text x="197.5" y="410.7" font-family="'Liberation Sans', sans-serif" font-size="13" fill="#111" text-anchor="end" letter-spacing="0.1">1100</text><line x1="204" y1="377.5" x2="209" y2="377.5" stroke="#000" stroke-width="1"/><text x="197.5" y="381.8" font-family="'Liberation Sans', sans-serif" font-size="13" fill="#111" text-anchor="end" letter-spacing="0.1">1200</text><line x1="204" y1="348.5" x2="209" y2="348.5" stroke="#000" stroke-width="1"/><text x="197.5" y="352.8" font-family="'Liberation Sans', sans-serif" font-size="13" fill="#111" text-anchor="end" letter-spacing="0.1">1300</text><line x1="204" y1="319.5" x2="209" y2="319.5" stroke="#000" stroke-width="1"/><text x="197.5" y="323.8" font-family="'Liberation Sans', sans-serif" font-size="13" fill="#111" text-anchor="end" letter-spacing="0.1">1400</text><line x1="204" y1="290.5" x2="209" y2="290.5" stroke="#000" stroke-width="1"/><text x="197.5" y="294.8" font-family="'Liberation Sans', sans-serif" font-size="13" fill="#111" text-anchor="end" letter-spacing="0.1">1500</text><line x1="280" y1="290.5" x2="280" y2="726.0" stroke="#000" stroke-width="2"/><line x1="275" y1="725.5" x2="280" y2="725.5" stroke="#000" stroke-width="1"/><text x="268" y="729.4" font-family="'Liberation Sans', sans-serif" font-size="13" fill="#111" text-anchor="end" letter-spacing="0.1">0</text><line x1="275" y1="682.5" x2="280" y2="682.5" stroke="#000" stroke-width="1"/><text x="268" y="685.9" font-family="'Liberation Sans', sans-serif" font-size="13" fill="#111" text-anchor="end" letter-spacing="0.1">10</text><line x1="275" y1="638.5" x2="280" y2="638.5" stroke="#000" stroke-width="1"/><text x="268" y="642.5" font-family="'Liberation Sans', sans-serif" font-size="13" fill="#111" text-anchor="end" letter-spacing="0.1">20</text><line x1="275" y1="595.5" x2="280" y2="595.5" stroke="#000" stroke-width="1"/><text x="268" y="599.0" font-family="'Liberation Sans', sans-serif" font-size="13" fill="#111" text-anchor="end" letter-spacing="0.1">30</text><line x1="275" y1="551.5" x2="280" y2="551.5" stroke="#000" stroke-width="1"/><text x="268" y="555.6" font-family="'Liberation Sans', sans-serif" font-size="13" fill="#111" text-anchor="end" letter-spacing="0.1">40</text><line x1="275" y1="508.5" x2="280" y2="508.5" stroke="#000" stroke-width="1"/><text x="268" y="512.1" font-family="'Liberation Sans', sans-serif" font-size="13" fill="#111" text-anchor="end" letter-spacing="0.1">50</text><line x1="275" y1="464.5" x2="280" y2="464.5" stroke="#000" stroke-width="1"/><text x="268" y="468.7" font-family="'Liberation Sans', sans-serif" font-size="13" fill="#111" text-anchor="end" letter-spacing="0.1">60</text><line x1="275" y1="421.5" x2="280" y2="421.5" stroke="#000" stroke-width="1"/><text x="268" y="425.2" font-family="'Liberation Sans', sans-serif" font-size="13" fill="#111" text-anchor="end" letter-spacing="0.1">70</text><line x1="275" y1="377.5" x2="280" y2="377.5" stroke="#000" stroke-width="1"/><text x="268" y="381.8" font-family="'Liberation Sans', sans-serif" font-size="13" fill="#111" text-anchor="end" letter-spacing="0.1">80</text><line x1="275" y1="334.5" x2="280" y2="334.5" stroke="#000" stroke-width="1"/><text x="268" y="338.4" font-family="'Liberation Sans', sans-serif" font-size="13" fill="#111" text-anchor="end" letter-spacing="0.1">90</text><line x1="275" y1="290.5" x2="280" y2="290.5" stroke="#000" stroke-width="1"/><text x="268" y="294.9" font-family="'Liberation Sans', sans-serif" font-size="13" fill="#111" text-anchor="end" letter-spacing="0.1">100</text><line x1="280.0" y1="725.5" x2="961.0" y2="725.5" stroke="#444" stroke-width="1.2"/><text x="99" y="508" transform="rotate(-90 99 508)" font-family="'Liberation Sans', sans-serif" font-size="15" fill="#222" text-anchor="middle" letter-spacing="0.3">%rF</text><text x="169" y="508" transform="rotate(-90 169 508)" font-family="'Liberation Sans', sans-serif" font-size="15" fill="#222" text-anchor="middle" letter-spacing="0.3">mBar</text><text x="241" y="508" transform="rotate(-90 241 508)" font-family="'Liberation Sans', sans-serif" font-size="15" fill="#222" text-anchor="middle" letter-spacing="0.3">°C</text><line x1="299.5" y1="833" x2="299.5" y2="838.5" stroke="#222" stroke-width="1.2"/><text x="299.5" y="853" font-family="'Liberation Sans', sans-serif" font-size="13" fill="#222" text-anchor="middle" letter-spacing="1.0">11:15</text><line x1="410.5" y1="833" x2="410.5" y2="838.5" stroke="#222" stroke-width="1.2"/><text x="410.5" y="853" font-family="'Liberation Sans', sans-serif" font-size="13" fill="#222" text-anchor="middle" letter-spacing="1.0">11:20</text><line x1="521.5" y1="833" x2="521.5" y2="838.5" stroke="#222" stroke-width="1.2"/><text x="521.5" y="853" font-family="'Liberation Sans', sans-serif" font-size="13" fill="#222" text-anchor="middle" letter-spacing="1.0">11:25</text><line x1="632.5" y1="833" x2="632.5" y2="838.5" stroke="#222" stroke-width="1.2"/><text x="632.5" y="853" font-family="'Liberation Sans', sans-serif" font-size="13" fill="#222" text-anchor="middle" letter-spacing="1.0">11:30</text><line x1="743.5" y1="833" x2="743.5" y2="838.5" stroke="#222" stroke-width="1.2"/><text x="743.5" y="853" font-family="'Liberation Sans', sans-serif" font-size="13" fill="#222" text-anchor="middle" letter-spacing="1.0">11:35</text><line x1="854.5" y1="833" x2="854.5" y2="838.5" stroke="#222" stroke-width="1.2"/><text x="854.5" y="853" font-family="'Liberation Sans', sans-serif" font-size="13" fill="#222" text-anchor="middle" letter-spacing="1.0">11:40</text><text x="299.5" y="868.5" font-family="'Liberation Sans', sans-serif" font-size="13" fill="#222" text-anchor="middle" letter-spacing="0.36">05.08.2025</text><polygon points="1003.50,305.00 1000.50,310.20 994.50,310.20 991.50,305.00 994.50,299.80 1000.50,299.80" fill="#F5C77E"/><polygon points="1003.50,324.30 1000.50,329.50 994.50,329.50 991.50,324.30 994.50,319.10 1000.50,319.10" fill="#8080FF"/><text x="1018" y="309.6" font-family="'Liberation Sans', sans-serif" font-size="13" fill="#a9a9a9" letter-spacing="0.25">Events: Symbol</text><text x="1018" y="328.8" font-family="'Liberation Sans', sans-serif" font-size="13" fill="#a9a9a9" letter-spacing="0.25">Information: Symbol</text><text x="982.5" y="359" font-family="'Liberation Sans', sans-serif" font-size="14" fill="#000" letter-spacing="0.42">Scale 0°C to 100°C</text><line x1="982.5" y1="373.4" x2="1012.5" y2="373.4" stroke="#D62728" stroke-width="2"/><text x="1018" y="378" font-family="'Liberation Sans', sans-serif" font-size="13" fill="#444" letter-spacing="0.22">Temperatur T38.1</text><text x="982.5" y="408" font-family="'Liberation Sans', sans-serif" font-size="14" fill="#000" letter-spacing="0.42">Scale 0mBar to 1,500mBar</text><line x1="982.5" y1="422.4" x2="1012.5" y2="422.4" stroke="#1F77B4" stroke-width="2"/><text x="1018" y="427" font-family="'Liberation Sans', sans-serif" font-size="13" fill="#444" letter-spacing="0.22">Druck P54.2</text><line x1="982.5" y1="441.4" x2="1012.5" y2="441.4" stroke="#AEC7E8" stroke-width="2"/><text x="1018" y="446" font-family="'Liberation Sans', sans-serif" font-size="13" fill="#444" letter-spacing="0.22">Druck P56.2</text><text x="982.5" y="476" font-family="'Liberation Sans', sans-serif" font-size="14" fill="#000" letter-spacing="0.42">Scale 0%rF to 100%rF</text><line x1="982.5" y1="490.4" x2="1012.5" y2="490.4" stroke="#98DF8A" stroke-width="2"/><text x="1018" y="495" font-family="'Liberation Sans', sans-serif" font-size="13" fill="#444" letter-spacing="0.22">Feuchte H79.3</text><text x="982.5" y="525" font-family="'Liberation Sans', sans-serif" font-size="14" fill="#444" letter-spacing="0.42">Digital</text><line x1="982.5" y1="539.4" x2="1012.5" y2="539.4" stroke="#BCBD22" stroke-width="2"/><text x="1018" y="544" font-family="'Liberation Sans', sans-serif" font-size="13" fill="#444" letter-spacing="0.22">Schleuse P102</text><line x1="982.5" y1="558.4" x2="1012.5" y2="558.4" stroke="#FFBB78" stroke-width="2"/><text x="1018" y="563" font-family="'Liberation Sans', sans-serif" font-size="13" fill="#444" letter-spacing="0.22">Luftbefeuchtung</text><line x1="982.5" y1="577.4" x2="1012.5" y2="577.4" stroke="#C5B0D5" stroke-width="2"/><text x="1018" y="582" font-family="'Liberation Sans', sans-serif" font-size="13" fill="#444" letter-spacing="0.22">Sterilisation</text><g fill="#c4c4c4"><path d="M896 251 L899 251 L900.5 248.5 L904 248.5 L905.5 251 L908.5 251 Q910 251 910 252.5 L910 260 Q910 261.5 908.5 261.5 L895.5 261.5 Q894 261.5 894 260 L894 252.5 Q894 251 895.5 251 Z"/></g><circle cx="901.9" cy="255.7" r="3.9" fill="#fff"/><circle cx="901.9" cy="255.7" r="2.2" fill="#c4c4c4"/><circle cx="907.6" cy="253.1" r="0.75" fill="#fff"/><path d="M927.5 255.3 L934 249.5 L940.5 255.3" fill="none" stroke="#c4c4c4" stroke-width="1.6"/><rect x="937.6" y="249" width="1.9" height="4" fill="#c4c4c4"/><path d="M929 255.5 L934 251.2 L939 255.5 L939 261 L935.6 261 L935.6 257.5 L932.4 257.5 L932.4 261 L929 261 Z" fill="#c4c4c4"/><circle cx="958.3" cy="254.5" r="5" fill="none" stroke="#c4c4c4" stroke-width="1.6"/><line x1="961.8" y1="258" x2="965" y2="261.5" stroke="#c4c4c4" stroke-width="1.8"/><circle cx="954" cy="259" r="2.6" fill="#fff" stroke="#c4c4c4" stroke-width="1.2"/><path d="M952.6 259 H955.4 M954.2 257.7 L952.6 259 L954.2 260.3" fill="none" stroke="#c4c4c4" stroke-width="0.9"/><circle cx="982.3" cy="254.5" r="5" fill="none" stroke="#c4c4c4" stroke-width="1.6"/><line x1="985.8" y1="258" x2="989" y2="261.5" stroke="#c4c4c4" stroke-width="1.8"/><circle cx="978" cy="259" r="2.6" fill="#fff" stroke="#c4c4c4" stroke-width="1.2"/><path d="M976.6 259 H979.4 M977.8 257.7 L979.4 259 L977.8 260.3" fill="none" stroke="#c4c4c4" stroke-width="0.9"/><path d="M1001 252.5 L1003 252.5 M1005 252.5 L1006.5 252.5 M1008 252.5 L1011 252.5 M1008.5 250 L1011.5 252.5 L1008.5 255 M1012 257.5 L1010 257.5 M1008 257.5 L1006.5 257.5 M1005 257.5 L1002 257.5 M1004.5 255 L1001.5 257.5 L1004.5 260" fill="none" stroke="#c4c4c4" stroke-width="1.4"/><circle cx="1031.5" cy="250.5" r="2" fill="#c4c4c4"/><rect x="1022" y="249.5" width="2" height="2" fill="#c4c4c4"/><rect x="1026" y="249.5" width="2" height="2" fill="#c4c4c4"/><rect x="1030.8" y="254" width="1.6" height="2" fill="#c4c4c4"/><rect x="1030.8" y="258.2" width="1.6" height="2" fill="#c4c4c4"/><path d="M1046 255 L1049 251 L1062 251 L1062 259 L1049 259 Z" fill="#c4c4c4"/><path d="M1070 251.3 L1072.5 249 L1086 249 L1086 253.5 L1072.5 253.5 Z M1070 258.5 L1072.5 256 L1086 256 L1086 260.8 L1072.5 260.8 Z" fill="#7a7a7a"/><path d="M1095.5 257.8 L1100.5 252.3 L1104 256.5 L1108.5 251.5" fill="none" stroke="#c4c4c4" stroke-width="1.4"/><circle cx="1096" cy="257.5" r="1.1" fill="#c4c4c4"/><circle cx="1108.3" cy="251.8" r="1.1" fill="#c4c4c4"/><rect x="1118.5" y="247.5" width="15" height="15" rx="1" fill="none" stroke="#c4c4c4" stroke-width="1"/><path d="M1123 252.5 L1126 250 L1129 252.5 M1123 257.5 L1126 260 L1129 257.5" fill="none" stroke="#c4c4c4" stroke-width="1"/><path d="M1142 252.5 L1148.5 248 L1153.5 252 L1158 248" fill="none" stroke="#7a7a7a" stroke-width="2"/><rect x="1142" y="256" width="16" height="2" fill="#7a7a7a"/><rect x="1142" y="260.5" width="16" height="2" fill="#7a7a7a"/></svg>
<div style="position:absolute;left:1231px;top:243px;width:631px;height:106px;background:#fff;border-radius:4px;box-shadow:0 2px 1px -1px rgba(0,0,0,.2),0 1px 1px 0 rgba(0,0,0,.14),0 1px 3px 0 rgba(0,0,0,.12);"></div>
<svg style="position:absolute;left:1256px;top:253px;overflow:visible;" width="22" height="16" viewBox="0 0 22 16"><rect x="1.1" y="3.2" width="5.8" height="1.7" fill="#111"/><rect x="1.1" y="8.1" width="5.8" height="1.7" fill="#111"/><rect x="1.1" y="13.1" width="10.8" height="1.7" fill="#111"/><circle cx="13.4" cy="6.9" r="3.7" fill="none" stroke="#111" stroke-width="1.7"/><line x1="16" y1="9.6" x2="20.6" y2="14.2" stroke="#111" stroke-width="1.9"/></svg>
<div class="t" style="left:1285.80px;top:255.00px;font-size:12px;line-height:12px;color:#1a1a1a;font-weight:bold;letter-spacing:-0.55px;font-style:normal;">Going to: Value</div>
<svg style="position:absolute;left:1828px;top:254px;overflow:visible;" width="12" height="9" viewBox="0 0 12 9"><path d="M1.2 7.8 L6 3 L10.8 7.8" fill="none" stroke="#555" stroke-width="1.7"/></svg>
<div style="position:absolute;left:1247px;top:284px;width:189px;height:37px;background:#f5f5f5;border-radius:4px 4px 0 0;border-bottom:1px solid #8a8a8a;"></div>
<div style="position:absolute;left:1441px;top:284px;width:119px;height:37px;background:#f5f5f5;border-radius:4px 4px 0 0;border-bottom:1px solid #8a8a8a;"></div>
<div style="position:absolute;left:1565px;top:284px;width:180px;height:37px;background:#f5f5f5;border-radius:4px 4px 0 0;border-bottom:1px solid #8a8a8a;"></div>
<div class="t" style="left:1264.00px;top:297.00px;font-size:12px;line-height:12px;color:#222;font-weight:normal;letter-spacing:-0.1px;font-style:normal;">Temperatur T38.1 [act]</div>
<svg style="position:absolute;left:1409.3px;top:300.7px;overflow:visible;" width="12" height="6" viewBox="0 0 12 6"><path d="M0.5 0.5 L10.5 0.5 L5.5 5.5 Z" fill="#777"/></svg>
<svg style="position:absolute;left:1533.5px;top:301.3px;overflow:visible;" width="12" height="6" viewBox="0 0 12 6"><path d="M0.5 0.5 L10.5 0.5 L5.5 5.5 Z" fill="#777"/></svg>
<svg style="position:absolute;left:1457.5px;top:291.9px;overflow:visible;" width="24" height="24" viewBox="0 0 24 24"><path d="M16 6l2.29 2.29-4.88 4.88-4-4L2 16.59 3.41 18l6-6 4 4 6.3-6.29L22 12V6z" fill="#111"/></svg>
<div class="t" style="left:1581.00px;top:297.00px;font-size:12px;line-height:12px;color:#222;font-weight:normal;letter-spacing:0.1px;font-style:normal;">18.7</div>
<div style="position:absolute;left:1753.8px;top:288px;width:32px;height:32px;border-radius:50%;background:#213063;box-shadow:0 3px 5px -1px rgba(0,0,0,.2),0 6px 10px 0 rgba(0,0,0,.14),0 1px 18px 0 rgba(0,0,0,.12);"></div>
<div style="position:absolute;left:1798px;top:288px;width:32px;height:32px;border-radius:50%;background:#213063;box-shadow:0 3px 5px -1px rgba(0,0,0,.2),0 6px 10px 0 rgba(0,0,0,.14),0 1px 18px 0 rgba(0,0,0,.12);"></div>
<svg style="position:absolute;left:1764px;top:298px;overflow:visible;" width="12" height="12" viewBox="0 0 12 12"><path d="M8 1.5 L3.5 6 L8 10.5" fill="none" stroke="#fff" stroke-width="2.2"/></svg>
<svg style="position:absolute;left:1806px;top:298px;overflow:visible;" width="16" height="12" viewBox="0 0 16 12"><path d="M3 1.5 L7.5 6 L3 10.5 M8.5 1.5 L13 6 L8.5 10.5" fill="none" stroke="#fff" stroke-width="2.2"/></svg>
<div style="position:absolute;left:1777.65px;top:279.1px;width:12.3px;height:17.6px;border-radius:50%;background:#52E3C2;"></div>
<div class="t" style="left:1483.80px;width:600px;text-align:center;top:284.00px;font-size:10px;line-height:10px;color:#213063;font-weight:bold;letter-spacing:-0.2px;font-style:normal;">4</div>
<div style="position:absolute;left:1821.55px;top:279.1px;width:15.7px;height:17.6px;border-radius:50%;background:#52E3C2;"></div>
<div class="t" style="left:1529.40px;width:600px;text-align:center;top:284.00px;font-size:10px;line-height:10px;color:#213063;font-weight:bold;letter-spacing:-0.2px;font-style:normal;">14</div>
<div style="position:absolute;left:1231px;top:369px;width:620px;height:501px;overflow:hidden;">
<div style="position:absolute;left:0.00px;top:-141.80px;width:620.00px;height:1.00px;background:#E4E6EC;"></div>
<div style="position:absolute;left:164.00px;top:-141.80px;width:1.00px;height:37.00px;background:#6a6a6a;"></div>
<div style="position:absolute;left:259.30px;top:-141.80px;width:1.00px;height:37.00px;background:#6a6a6a;"></div>
<div style="position:absolute;left:358.40px;top:-141.80px;width:1.00px;height:37.00px;background:#6a6a6a;"></div>
<div style="position:absolute;left:457.30px;top:-141.80px;width:1.00px;height:37.00px;background:#6a6a6a;"></div>
<div style="position:absolute;left:538.20px;top:-141.80px;width:1.00px;height:37.00px;background:#6a6a6a;"></div>
<div style="position:absolute;left:619.30px;top:-141.80px;width:1.00px;height:37.00px;background:#6a6a6a;"></div>
<div class="t" style="left:14.50px;top:-131.00px;font-size:14px;line-height:14px;color:#222;font-weight:normal;letter-spacing:0.19px;">05.08.2025 11:19:17</div>
<div class="t" style="left:179.80px;top:-123.00px;font-size:14px;line-height:14px;color:#222;font-weight:normal;letter-spacing:0.05px;">17.04  °C</div>
<div class="t" style="left:108.86px;width:200px;text-align:center;top:-136.00px;font-size:10px;line-height:10px;color:#BBD5F3;font-weight:normal;letter-spacing:0.12px;">+969ms</div>
<div class="t" style="left:274.60px;top:-123.00px;font-size:14px;line-height:14px;color:#222;font-weight:normal;letter-spacing:0.05px;">1,176  mBar</div>
<div class="t" style="left:212.50px;width:200px;text-align:center;top:-136.00px;font-size:10px;line-height:10px;color:#BBD5F3;font-weight:normal;letter-spacing:0.12px;">+969ms</div>
<div class="t" style="left:373.50px;top:-123.00px;font-size:14px;line-height:14px;color:#222;font-weight:normal;letter-spacing:0.05px;">600  mBar</div>
<div class="t" style="left:305.57px;width:200px;text-align:center;top:-136.00px;font-size:10px;line-height:10px;color:#BBD5F3;font-weight:normal;letter-spacing:0.12px;">+969ms</div>
<div class="t" style="left:471.80px;top:-123.00px;font-size:14px;line-height:14px;color:#222;font-weight:normal;letter-spacing:0.05px;">50.0  %rF</div>
<div class="t" style="left:402.71px;width:200px;text-align:center;top:-136.00px;font-size:10px;line-height:10px;color:#BBD5F3;font-weight:normal;letter-spacing:0.12px;">+969ms</div>
<div class="t" style="left:467.00px;width:200px;text-align:center;top:-136.00px;font-size:10px;line-height:10px;color:#BBD5F3;font-weight:normal;letter-spacing:0.12px;">+969ms</div>
<div style="position:absolute;left:557.00px;top:-124.60px;width:17.00px;height:18.60px;background:transparent;box-sizing:border-box;border:1px solid #111;"></div>
<div class="t" style="left:465.50px;width:200px;text-align:center;top:-123.00px;font-size:14px;line-height:14px;color:#222;font-weight:normal;letter-spacing:0px;">0</div>
<div style="position:absolute;left:0.00px;top:-104.80px;width:620.00px;height:1.00px;background:#E4E6EC;"></div>
<div style="position:absolute;left:164.00px;top:-104.80px;width:1.00px;height:37.00px;background:#6a6a6a;"></div>
<div style="position:absolute;left:259.30px;top:-104.80px;width:1.00px;height:37.00px;background:#6a6a6a;"></div>
<div style="position:absolute;left:358.40px;top:-104.80px;width:1.00px;height:37.00px;background:#6a6a6a;"></div>
<div style="position:absolute;left:457.30px;top:-104.80px;width:1.00px;height:37.00px;background:#6a6a6a;"></div>
<div style="position:absolute;left:538.20px;top:-104.80px;width:1.00px;height:37.00px;background:#6a6a6a;"></div>
<div style="position:absolute;left:619.30px;top:-104.80px;width:1.00px;height:37.00px;background:#6a6a6a;"></div>
<div class="t" style="left:14.50px;top:-94.00px;font-size:14px;line-height:14px;color:#222;font-weight:normal;letter-spacing:0.19px;">05.08.2025 11:19:27</div>
<div class="t" style="left:179.80px;top:-86.00px;font-size:14px;line-height:14px;color:#222;font-weight:normal;letter-spacing:0.05px;">17.06  °C</div>
<div class="t" style="left:108.86px;width:200px;text-align:center;top:-99.00px;font-size:10px;line-height:10px;color:#BBD5F3;font-weight:normal;letter-spacing:0.12px;">+969ms</div>
<div class="t" style="left:274.60px;top:-86.00px;font-size:14px;line-height:14px;color:#222;font-weight:normal;letter-spacing:0.05px;">1,175  mBar</div>
<div class="t" style="left:212.50px;width:200px;text-align:center;top:-99.00px;font-size:10px;line-height:10px;color:#BBD5F3;font-weight:normal;letter-spacing:0.12px;">+969ms</div>
<div class="t" style="left:373.50px;top:-86.00px;font-size:14px;line-height:14px;color:#222;font-weight:normal;letter-spacing:0.05px;">600  mBar</div>
<div class="t" style="left:305.57px;width:200px;text-align:center;top:-99.00px;font-size:10px;line-height:10px;color:#BBD5F3;font-weight:normal;letter-spacing:0.12px;">+969ms</div>
<div class="t" style="left:471.80px;top:-86.00px;font-size:14px;line-height:14px;color:#222;font-weight:normal;letter-spacing:0.05px;">49.5  %rF</div>
<div class="t" style="left:402.71px;width:200px;text-align:center;top:-99.00px;font-size:10px;line-height:10px;color:#BBD5F3;font-weight:normal;letter-spacing:0.12px;">+969ms</div>
<div class="t" style="left:467.00px;width:200px;text-align:center;top:-99.00px;font-size:10px;line-height:10px;color:#BBD5F3;font-weight:normal;letter-spacing:0.12px;">+969ms</div>
<div style="position:absolute;left:557.00px;top:-87.60px;width:17.00px;height:18.60px;background:transparent;box-sizing:border-box;border:1px solid #111;"></div>
<div class="t" style="left:465.50px;width:200px;text-align:center;top:-86.00px;font-size:14px;line-height:14px;color:#222;font-weight:normal;letter-spacing:0px;">0</div>
<div style="position:absolute;left:0.00px;top:-67.80px;width:620.00px;height:1.00px;background:#E4E6EC;"></div>
<div style="position:absolute;left:164.00px;top:-67.80px;width:1.00px;height:37.00px;background:#6a6a6a;"></div>
<div style="position:absolute;left:259.30px;top:-67.80px;width:1.00px;height:37.00px;background:#6a6a6a;"></div>
<div style="position:absolute;left:358.40px;top:-67.80px;width:1.00px;height:37.00px;background:#6a6a6a;"></div>
<div style="position:absolute;left:457.30px;top:-67.80px;width:1.00px;height:37.00px;background:#6a6a6a;"></div>
<div style="position:absolute;left:538.20px;top:-67.80px;width:1.00px;height:37.00px;background:#6a6a6a;"></div>
<div style="position:absolute;left:619.30px;top:-67.80px;width:1.00px;height:37.00px;background:#6a6a6a;"></div>
<div class="t" style="left:14.50px;top:-57.00px;font-size:14px;line-height:14px;color:#222;font-weight:normal;letter-spacing:0.19px;">05.08.2025 11:19:37</div>
<div class="t" style="left:179.80px;top:-49.00px;font-size:14px;line-height:14px;color:#222;font-weight:normal;letter-spacing:0.05px;">17.44  °C</div>
<div class="t" style="left:108.86px;width:200px;text-align:center;top:-62.00px;font-size:10px;line-height:10px;color:#BBD5F3;font-weight:normal;letter-spacing:0.12px;">+969ms</div>
<div class="t" style="left:274.60px;top:-49.00px;font-size:14px;line-height:14px;color:#222;font-weight:normal;letter-spacing:0.05px;">1,170  mBar</div>
<div class="t" style="left:212.50px;width:200px;text-align:center;top:-62.00px;font-size:10px;line-height:10px;color:#BBD5F3;font-weight:normal;letter-spacing:0.12px;">+969ms</div>
<div class="t" style="left:373.50px;top:-49.00px;font-size:14px;line-height:14px;color:#222;font-weight:normal;letter-spacing:0.05px;">600  mBar</div>
<div class="t" style="left:305.57px;width:200px;text-align:center;top:-62.00px;font-size:10px;line-height:10px;color:#BBD5F3;font-weight:normal;letter-spacing:0.12px;">+969ms</div>
<div class="t" style="left:471.80px;top:-49.00px;font-size:14px;line-height:14px;color:#222;font-weight:normal;letter-spacing:0.05px;">49.0  %rF</div>
<div class="t" style="left:402.71px;width:200px;text-align:center;top:-62.00px;font-size:10px;line-height:10px;color:#BBD5F3;font-weight:normal;letter-spacing:0.12px;">+969ms</div>
<div class="t" style="left:467.00px;width:200px;text-align:center;top:-62.00px;font-size:10px;line-height:10px;color:#BBD5F3;font-weight:normal;letter-spacing:0.12px;">+969ms</div>
<div style="position:absolute;left:557.00px;top:-50.60px;width:17.00px;height:18.60px;background:transparent;box-sizing:border-box;border:1px solid #111;"></div>
<div class="t" style="left:465.50px;width:200px;text-align:center;top:-49.00px;font-size:14px;line-height:14px;color:#222;font-weight:normal;letter-spacing:0px;">0</div>
<div style="position:absolute;left:0.00px;top:-30.80px;width:620.00px;height:1.00px;background:#E4E6EC;"></div>
<div style="position:absolute;left:164.00px;top:-30.80px;width:1.00px;height:37.00px;background:#6a6a6a;"></div>
<div style="position:absolute;left:259.30px;top:-30.80px;width:1.00px;height:37.00px;background:#6a6a6a;"></div>
<div style="position:absolute;left:358.40px;top:-30.80px;width:1.00px;height:37.00px;background:#6a6a6a;"></div>
<div style="position:absolute;left:457.30px;top:-30.80px;width:1.00px;height:37.00px;background:#6a6a6a;"></div>
<div style="position:absolute;left:538.20px;top:-30.80px;width:1.00px;height:37.00px;background:#6a6a6a;"></div>
<div style="position:absolute;left:619.30px;top:-30.80px;width:1.00px;height:37.00px;background:#6a6a6a;"></div>
<div class="t" style="left:14.50px;top:-20.00px;font-size:14px;line-height:14px;color:#222;font-weight:normal;letter-spacing:0.19px;">05.08.2025 11:19:47</div>
<div class="t" style="left:179.80px;top:-12.00px;font-size:14px;line-height:14px;color:#222;font-weight:normal;letter-spacing:0.05px;">18.04  °C</div>
<div class="t" style="left:108.86px;width:200px;text-align:center;top:-25.00px;font-size:10px;line-height:10px;color:#BBD5F3;font-weight:normal;letter-spacing:0.12px;">+969ms</div>
<div class="t" style="left:274.60px;top:-12.00px;font-size:14px;line-height:14px;color:#222;font-weight:normal;letter-spacing:0.05px;">1,160  mBar</div>
<div class="t" style="left:212.50px;width:200px;text-align:center;top:-25.00px;font-size:10px;line-height:10px;color:#BBD5F3;font-weight:normal;letter-spacing:0.12px;">+969ms</div>
<div class="t" style="left:373.50px;top:-12.00px;font-size:14px;line-height:14px;color:#222;font-weight:normal;letter-spacing:0.05px;">605  mBar</div>
<div class="t" style="left:305.57px;width:200px;text-align:center;top:-25.00px;font-size:10px;line-height:10px;color:#BBD5F3;font-weight:normal;letter-spacing:0.12px;">+969ms</div>
<div class="t" style="left:471.80px;top:-12.00px;font-size:14px;line-height:14px;color:#222;font-weight:normal;letter-spacing:0.05px;">48.6  %rF</div>
<div class="t" style="left:402.71px;width:200px;text-align:center;top:-25.00px;font-size:10px;line-height:10px;color:#BBD5F3;font-weight:normal;letter-spacing:0.12px;">+969ms</div>
<div class="t" style="left:467.00px;width:200px;text-align:center;top:-25.00px;font-size:10px;line-height:10px;color:#BBD5F3;font-weight:normal;letter-spacing:0.12px;">+969ms</div>
<div style="position:absolute;left:557.00px;top:-13.60px;width:17.00px;height:18.60px;background:transparent;box-sizing:border-box;border:1px solid #111;"></div>
<div class="t" style="left:465.50px;width:200px;text-align:center;top:-12.00px;font-size:14px;line-height:14px;color:#222;font-weight:normal;letter-spacing:0px;">0</div>
<div style="position:absolute;left:0.00px;top:6.20px;width:620.00px;height:1.00px;background:#E4E6EC;"></div>
<div style="position:absolute;left:164.00px;top:6.20px;width:1.00px;height:37.00px;background:#6a6a6a;"></div>
<div style="position:absolute;left:259.30px;top:6.20px;width:1.00px;height:37.00px;background:#6a6a6a;"></div>
<div style="position:absolute;left:358.40px;top:6.20px;width:1.00px;height:37.00px;background:#6a6a6a;"></div>
<div style="position:absolute;left:457.30px;top:6.20px;width:1.00px;height:37.00px;background:#6a6a6a;"></div>
<div style="position:absolute;left:538.20px;top:6.20px;width:1.00px;height:37.00px;background:#6a6a6a;"></div>
<div style="position:absolute;left:619.30px;top:6.20px;width:1.00px;height:37.00px;background:#6a6a6a;"></div>
<div class="t" style="left:14.50px;top:17.00px;font-size:14px;line-height:14px;color:#222;font-weight:normal;letter-spacing:0.19px;">05.08.2025 11:19:57</div>
<div class="t" style="left:179.80px;top:25.00px;font-size:14px;line-height:14px;color:#222;font-weight:normal;letter-spacing:0.05px;">17.96  °C</div>
<div class="t" style="left:108.86px;width:200px;text-align:center;top:12.00px;font-size:10px;line-height:10px;color:#BBD5F3;font-weight:normal;letter-spacing:0.12px;">+969ms</div>
<div class="t" style="left:274.60px;top:25.00px;font-size:14px;line-height:14px;color:#222;font-weight:normal;letter-spacing:0.05px;">1,149  mBar</div>
<div class="t" style="left:212.50px;width:200px;text-align:center;top:12.00px;font-size:10px;line-height:10px;color:#BBD5F3;font-weight:normal;letter-spacing:0.12px;">+969ms</div>
<div class="t" style="left:373.50px;top:25.00px;font-size:14px;line-height:14px;color:#222;font-weight:normal;letter-spacing:0.05px;">608  mBar</div>
<div class="t" style="left:305.57px;width:200px;text-align:center;top:12.00px;font-size:10px;line-height:10px;color:#BBD5F3;font-weight:normal;letter-spacing:0.12px;">+969ms</div>
<div class="t" style="left:471.80px;top:25.00px;font-size:14px;line-height:14px;color:#222;font-weight:normal;letter-spacing:0.05px;">48.3  %rF</div>
<div class="t" style="left:402.71px;width:200px;text-align:center;top:12.00px;font-size:10px;line-height:10px;color:#BBD5F3;font-weight:normal;letter-spacing:0.12px;">+969ms</div>
<div class="t" style="left:467.00px;width:200px;text-align:center;top:12.00px;font-size:10px;line-height:10px;color:#BBD5F3;font-weight:normal;letter-spacing:0.12px;">+969ms</div>
<div style="position:absolute;left:557.00px;top:23.40px;width:17.00px;height:18.60px;background:transparent;box-sizing:border-box;border:1px solid #111;"></div>
<div class="t" style="left:465.50px;width:200px;text-align:center;top:25.00px;font-size:14px;line-height:14px;color:#222;font-weight:normal;letter-spacing:0px;">0</div>
<div style="position:absolute;left:0.00px;top:43.20px;width:620.00px;height:1.00px;background:#E4E6EC;"></div>
<div style="position:absolute;left:164.00px;top:43.20px;width:1.00px;height:37.00px;background:#6a6a6a;"></div>
<div style="position:absolute;left:259.30px;top:43.20px;width:1.00px;height:37.00px;background:#6a6a6a;"></div>
<div style="position:absolute;left:358.40px;top:43.20px;width:1.00px;height:37.00px;background:#6a6a6a;"></div>
<div style="position:absolute;left:457.30px;top:43.20px;width:1.00px;height:37.00px;background:#6a6a6a;"></div>
<div style="position:absolute;left:538.20px;top:43.20px;width:1.00px;height:37.00px;background:#6a6a6a;"></div>
<div style="position:absolute;left:619.30px;top:43.20px;width:1.00px;height:37.00px;background:#6a6a6a;"></div>
<div class="t" style="left:14.50px;top:54.00px;font-size:14px;line-height:14px;color:#222;font-weight:normal;letter-spacing:0.19px;">05.08.2025 11:20:07</div>
<div class="t" style="left:179.80px;top:62.00px;font-size:14px;line-height:14px;color:#222;font-weight:normal;letter-spacing:0.05px;">17.40  °C</div>
<div class="t" style="left:108.86px;width:200px;text-align:center;top:49.00px;font-size:10px;line-height:10px;color:#BBD5F3;font-weight:normal;letter-spacing:0.12px;">+969ms</div>
<div class="t" style="left:274.60px;top:62.00px;font-size:14px;line-height:14px;color:#222;font-weight:normal;letter-spacing:0.05px;">1,180  mBar</div>
<div class="t" style="left:212.50px;width:200px;text-align:center;top:49.00px;font-size:10px;line-height:10px;color:#BBD5F3;font-weight:normal;letter-spacing:0.12px;">+969ms</div>
<div class="t" style="left:373.50px;top:62.00px;font-size:14px;line-height:14px;color:#222;font-weight:normal;letter-spacing:0.05px;">590  mBar</div>
<div class="t" style="left:305.57px;width:200px;text-align:center;top:49.00px;font-size:10px;line-height:10px;color:#BBD5F3;font-weight:normal;letter-spacing:0.12px;">+969ms</div>
<div class="t" style="left:471.80px;top:62.00px;font-size:14px;line-height:14px;color:#222;font-weight:normal;letter-spacing:0.05px;">47.8  %rF</div>
<div class="t" style="left:402.71px;width:200px;text-align:center;top:49.00px;font-size:10px;line-height:10px;color:#BBD5F3;font-weight:normal;letter-spacing:0.12px;">+969ms</div>
<div class="t" style="left:467.00px;width:200px;text-align:center;top:49.00px;font-size:10px;line-height:10px;color:#BBD5F3;font-weight:normal;letter-spacing:0.12px;">+969ms</div>
<div style="position:absolute;left:557.00px;top:60.40px;width:17.00px;height:18.60px;background:transparent;box-sizing:border-box;border:1px solid #111;"></div>
<div class="t" style="left:465.50px;width:200px;text-align:center;top:62.00px;font-size:14px;line-height:14px;color:#222;font-weight:normal;letter-spacing:0px;">0</div>
<div style="position:absolute;left:0.00px;top:80.20px;width:620.00px;height:1.00px;background:#E4E6EC;"></div>
<div style="position:absolute;left:164.00px;top:80.20px;width:1.00px;height:37.00px;background:#6a6a6a;"></div>
<div style="position:absolute;left:259.30px;top:80.20px;width:1.00px;height:37.00px;background:#6a6a6a;"></div>
<div style="position:absolute;left:358.40px;top:80.20px;width:1.00px;height:37.00px;background:#6a6a6a;"></div>
<div style="position:absolute;left:457.30px;top:80.20px;width:1.00px;height:37.00px;background:#6a6a6a;"></div>
<div style="position:absolute;left:538.20px;top:80.20px;width:1.00px;height:37.00px;background:#6a6a6a;"></div>
<div style="position:absolute;left:619.30px;top:80.20px;width:1.00px;height:37.00px;background:#6a6a6a;"></div>
<div class="t" style="left:14.50px;top:91.00px;font-size:14px;line-height:14px;color:#222;font-weight:normal;letter-spacing:0.19px;">05.08.2025 11:20:17</div>
<div class="t" style="left:179.80px;top:99.00px;font-size:14px;line-height:14px;color:#222;font-weight:normal;letter-spacing:0.05px;">17.04  °C</div>
<div class="t" style="left:108.86px;width:200px;text-align:center;top:86.00px;font-size:10px;line-height:10px;color:#BBD5F3;font-weight:normal;letter-spacing:0.12px;">+969ms</div>
<div class="t" style="left:274.60px;top:99.00px;font-size:14px;line-height:14px;color:#222;font-weight:normal;letter-spacing:0.05px;">1,198  mBar</div>
<div class="t" style="left:212.50px;width:200px;text-align:center;top:86.00px;font-size:10px;line-height:10px;color:#BBD5F3;font-weight:normal;letter-spacing:0.12px;">+969ms</div>
<div class="t" style="left:373.50px;top:99.00px;font-size:14px;line-height:14px;color:#222;font-weight:normal;letter-spacing:0.05px;">581  mBar</div>
<div class="t" style="left:305.57px;width:200px;text-align:center;top:86.00px;font-size:10px;line-height:10px;color:#BBD5F3;font-weight:normal;letter-spacing:0.12px;">+969ms</div>
<div class="t" style="left:471.80px;top:99.00px;font-size:14px;line-height:14px;color:#222;font-weight:normal;letter-spacing:0.05px;">47.3  %rF</div>
<div class="t" style="left:402.71px;width:200px;text-align:center;top:86.00px;font-size:10px;line-height:10px;color:#BBD5F3;font-weight:normal;letter-spacing:0.12px;">+969ms</div>
<div class="t" style="left:467.00px;width:200px;text-align:center;top:86.00px;font-size:10px;line-height:10px;color:#BBD5F3;font-weight:normal;letter-spacing:0.12px;">+969ms</div>
<div style="position:absolute;left:557.00px;top:97.40px;width:17.00px;height:18.60px;background:transparent;box-sizing:border-box;border:1px solid #111;"></div>
<div class="t" style="left:465.50px;width:200px;text-align:center;top:99.00px;font-size:14px;line-height:14px;color:#222;font-weight:normal;letter-spacing:0px;">0</div>
<div style="position:absolute;left:0.00px;top:117.20px;width:620.00px;height:1.00px;background:#E4E6EC;"></div>
<div style="position:absolute;left:164.00px;top:117.20px;width:1.00px;height:37.00px;background:#6a6a6a;"></div>
<div style="position:absolute;left:259.30px;top:117.20px;width:1.00px;height:37.00px;background:#6a6a6a;"></div>
<div style="position:absolute;left:358.40px;top:117.20px;width:1.00px;height:37.00px;background:#6a6a6a;"></div>
<div style="position:absolute;left:457.30px;top:117.20px;width:1.00px;height:37.00px;background:#6a6a6a;"></div>
<div style="position:absolute;left:538.20px;top:117.20px;width:1.00px;height:37.00px;background:#6a6a6a;"></div>
<div style="position:absolute;left:619.30px;top:117.20px;width:1.00px;height:37.00px;background:#6a6a6a;"></div>
<div class="t" style="left:14.50px;top:128.00px;font-size:14px;line-height:14px;color:#222;font-weight:normal;letter-spacing:0.19px;">05.08.2025 11:20:27</div>
<div class="t" style="left:179.80px;top:136.00px;font-size:14px;line-height:14px;color:#222;font-weight:normal;letter-spacing:0.05px;">17.06  °C</div>
<div class="t" style="left:108.86px;width:200px;text-align:center;top:123.00px;font-size:10px;line-height:10px;color:#BBD5F3;font-weight:normal;letter-spacing:0.12px;">+969ms</div>
<div class="t" style="left:274.60px;top:136.00px;font-size:14px;line-height:14px;color:#222;font-weight:normal;letter-spacing:0.05px;">1,197  mBar</div>
<div class="t" style="left:212.50px;width:200px;text-align:center;top:123.00px;font-size:10px;line-height:10px;color:#BBD5F3;font-weight:normal;letter-spacing:0.12px;">+969ms</div>
<div class="t" style="left:373.50px;top:136.00px;font-size:14px;line-height:14px;color:#222;font-weight:normal;letter-spacing:0.05px;">581  mBar</div>
<div class="t" style="left:305.57px;width:200px;text-align:center;top:123.00px;font-size:10px;line-height:10px;color:#BBD5F3;font-weight:normal;letter-spacing:0.12px;">+969ms</div>
<div class="t" style="left:471.80px;top:136.00px;font-size:14px;line-height:14px;color:#222;font-weight:normal;letter-spacing:0.05px;">46.8  %rF</div>
<div class="t" style="left:402.71px;width:200px;text-align:center;top:123.00px;font-size:10px;line-height:10px;color:#BBD5F3;font-weight:normal;letter-spacing:0.12px;">+969ms</div>
<div class="t" style="left:467.00px;width:200px;text-align:center;top:123.00px;font-size:10px;line-height:10px;color:#BBD5F3;font-weight:normal;letter-spacing:0.12px;">+969ms</div>
<div style="position:absolute;left:557.00px;top:134.40px;width:17.00px;height:18.60px;background:transparent;box-sizing:border-box;border:1px solid #111;"></div>
<div class="t" style="left:465.50px;width:200px;text-align:center;top:136.00px;font-size:14px;line-height:14px;color:#222;font-weight:normal;letter-spacing:0px;">1</div>
<div style="position:absolute;left:0.00px;top:154.20px;width:620.00px;height:1.00px;background:#E4E6EC;"></div>
<div style="position:absolute;left:164.00px;top:154.20px;width:1.00px;height:37.00px;background:#6a6a6a;"></div>
<div style="position:absolute;left:259.30px;top:154.20px;width:1.00px;height:37.00px;background:#6a6a6a;"></div>
<div style="position:absolute;left:358.40px;top:154.20px;width:1.00px;height:37.00px;background:#6a6a6a;"></div>
<div style="position:absolute;left:457.30px;top:154.20px;width:1.00px;height:37.00px;background:#6a6a6a;"></div>
<div style="position:absolute;left:538.20px;top:154.20px;width:1.00px;height:37.00px;background:#6a6a6a;"></div>
<div style="position:absolute;left:619.30px;top:154.20px;width:1.00px;height:37.00px;background:#6a6a6a;"></div>
<div class="t" style="left:14.50px;top:165.00px;font-size:14px;line-height:14px;color:#222;font-weight:normal;letter-spacing:0.19px;">05.08.2025 11:20:37</div>
<div class="t" style="left:179.80px;top:173.00px;font-size:14px;line-height:14px;color:#222;font-weight:normal;letter-spacing:0.05px;">17.44  °C</div>
<div class="t" style="left:108.86px;width:200px;text-align:center;top:160.00px;font-size:10px;line-height:10px;color:#BBD5F3;font-weight:normal;letter-spacing:0.12px;">+969ms</div>
<div class="t" style="left:274.60px;top:173.00px;font-size:14px;line-height:14px;color:#222;font-weight:normal;letter-spacing:0.05px;">1,179  mBar</div>
<div class="t" style="left:212.50px;width:200px;text-align:center;top:160.00px;font-size:10px;line-height:10px;color:#BBD5F3;font-weight:normal;letter-spacing:0.12px;">+969ms</div>
<div class="t" style="left:373.50px;top:173.00px;font-size:14px;line-height:14px;color:#222;font-weight:normal;letter-spacing:0.05px;">592  mBar</div>
<div class="t" style="left:305.57px;width:200px;text-align:center;top:160.00px;font-size:10px;line-height:10px;color:#BBD5F3;font-weight:normal;letter-spacing:0.12px;">+969ms</div>
<div class="t" style="left:471.80px;top:173.00px;font-size:14px;line-height:14px;color:#222;font-weight:normal;letter-spacing:0.05px;">46.3  %rF</div>
<div class="t" style="left:402.71px;width:200px;text-align:center;top:160.00px;font-size:10px;line-height:10px;color:#BBD5F3;font-weight:normal;letter-spacing:0.12px;">+969ms</div>
<div class="t" style="left:467.00px;width:200px;text-align:center;top:160.00px;font-size:10px;line-height:10px;color:#BBD5F3;font-weight:normal;letter-spacing:0.12px;">+969ms</div>
<div style="position:absolute;left:557.00px;top:171.40px;width:17.00px;height:18.60px;background:transparent;box-sizing:border-box;border:1px solid #111;"></div>
<div class="t" style="left:465.50px;width:200px;text-align:center;top:173.00px;font-size:14px;line-height:14px;color:#222;font-weight:normal;letter-spacing:0px;">1</div>
<div style="position:absolute;left:0.00px;top:191.20px;width:620.00px;height:1.00px;background:#E4E6EC;"></div>
<div style="position:absolute;left:164.00px;top:191.20px;width:1.00px;height:37.00px;background:#6a6a6a;"></div>
<div style="position:absolute;left:259.30px;top:191.20px;width:1.00px;height:37.00px;background:#6a6a6a;"></div>
<div style="position:absolute;left:358.40px;top:191.20px;width:1.00px;height:37.00px;background:#6a6a6a;"></div>
<div style="position:absolute;left:457.30px;top:191.20px;width:1.00px;height:37.00px;background:#6a6a6a;"></div>
<div style="position:absolute;left:538.20px;top:191.20px;width:1.00px;height:37.00px;background:#6a6a6a;"></div>
<div style="position:absolute;left:619.30px;top:191.20px;width:1.00px;height:37.00px;background:#6a6a6a;"></div>
<div class="t" style="left:14.50px;top:202.00px;font-size:14px;line-height:14px;color:#222;font-weight:normal;letter-spacing:0.19px;">05.08.2025 11:20:47</div>
<div class="t" style="left:179.80px;top:210.00px;font-size:14px;line-height:14px;color:#222;font-weight:normal;letter-spacing:0.05px;">18.04  °C</div>
<div class="t" style="left:108.86px;width:200px;text-align:center;top:197.00px;font-size:10px;line-height:10px;color:#BBD5F3;font-weight:normal;letter-spacing:0.12px;">+969ms</div>
<div class="t" style="left:274.60px;top:210.00px;font-size:14px;line-height:14px;color:#222;font-weight:normal;letter-spacing:0.05px;">1,144  mBar</div>
<div class="t" style="left:212.50px;width:200px;text-align:center;top:197.00px;font-size:10px;line-height:10px;color:#BBD5F3;font-weight:normal;letter-spacing:0.12px;">+969ms</div>
<div class="t" style="left:373.50px;top:210.00px;font-size:14px;line-height:14px;color:#222;font-weight:normal;letter-spacing:0.05px;">611  mBar</div>
<div class="t" style="left:305.57px;width:200px;text-align:center;top:197.00px;font-size:10px;line-height:10px;color:#BBD5F3;font-weight:normal;letter-spacing:0.12px;">+969ms</div>
<div class="t" style="left:471.80px;top:210.00px;font-size:14px;line-height:14px;color:#222;font-weight:normal;letter-spacing:0.05px;">45.8  %rF</div>
<div class="t" style="left:402.71px;width:200px;text-align:center;top:197.00px;font-size:10px;line-height:10px;color:#BBD5F3;font-weight:normal;letter-spacing:0.12px;">+969ms</div>
<div class="t" style="left:467.00px;width:200px;text-align:center;top:197.00px;font-size:10px;line-height:10px;color:#BBD5F3;font-weight:normal;letter-spacing:0.12px;">+969ms</div>
<div style="position:absolute;left:557.00px;top:208.40px;width:17.00px;height:18.60px;background:transparent;box-sizing:border-box;border:1px solid #111;"></div>
<div class="t" style="left:465.50px;width:200px;text-align:center;top:210.00px;font-size:14px;line-height:14px;color:#222;font-weight:normal;letter-spacing:0px;">1</div>
<div style="position:absolute;left:0.00px;top:228.20px;width:620.00px;height:1.00px;background:#E4E6EC;"></div>
<div style="position:absolute;left:164.00px;top:228.20px;width:1.00px;height:37.00px;background:#6a6a6a;"></div>
<div style="position:absolute;left:259.30px;top:228.20px;width:1.00px;height:37.00px;background:#6a6a6a;"></div>
<div style="position:absolute;left:358.40px;top:228.20px;width:1.00px;height:37.00px;background:#6a6a6a;"></div>
<div style="position:absolute;left:457.30px;top:228.20px;width:1.00px;height:37.00px;background:#6a6a6a;"></div>
<div style="position:absolute;left:538.20px;top:228.20px;width:1.00px;height:37.00px;background:#6a6a6a;"></div>
<div style="position:absolute;left:619.30px;top:228.20px;width:1.00px;height:37.00px;background:#6a6a6a;"></div>
<div class="t" style="left:14.50px;top:239.00px;font-size:14px;line-height:14px;color:#222;font-weight:normal;letter-spacing:0.19px;">05.08.2025 11:20:57</div>
<div class="t" style="left:179.80px;top:247.00px;font-size:14px;line-height:14px;color:#222;font-weight:normal;letter-spacing:0.05px;">18.62  °C</div>
<div class="t" style="left:108.86px;width:200px;text-align:center;top:234.00px;font-size:10px;line-height:10px;color:#BBD5F3;font-weight:normal;letter-spacing:0.12px;">+969ms</div>
<div class="t" style="left:274.60px;top:247.00px;font-size:14px;line-height:14px;color:#222;font-weight:normal;letter-spacing:0.05px;">1,094  mBar</div>
<div class="t" style="left:212.50px;width:200px;text-align:center;top:234.00px;font-size:10px;line-height:10px;color:#BBD5F3;font-weight:normal;letter-spacing:0.12px;">+969ms</div>
<div class="t" style="left:373.50px;top:247.00px;font-size:14px;line-height:14px;color:#222;font-weight:normal;letter-spacing:0.05px;">638  mBar</div>
<div class="t" style="left:305.57px;width:200px;text-align:center;top:234.00px;font-size:10px;line-height:10px;color:#BBD5F3;font-weight:normal;letter-spacing:0.12px;">+969ms</div>
<div class="t" style="left:471.80px;top:247.00px;font-size:14px;line-height:14px;color:#222;font-weight:normal;letter-spacing:0.05px;">45.4  %rF</div>
<div class="t" style="left:402.71px;width:200px;text-align:center;top:234.00px;font-size:10px;line-height:10px;color:#BBD5F3;font-weight:normal;letter-spacing:0.12px;">+969ms</div>
<div class="t" style="left:467.00px;width:200px;text-align:center;top:234.00px;font-size:10px;line-height:10px;color:#BBD5F3;font-weight:normal;letter-spacing:0.12px;">+969ms</div>
<div style="position:absolute;left:557.00px;top:245.40px;width:17.00px;height:18.60px;background:transparent;box-sizing:border-box;border:1px solid #111;"></div>
<div class="t" style="left:465.50px;width:200px;text-align:center;top:247.00px;font-size:14px;line-height:14px;color:#222;font-weight:normal;letter-spacing:0px;">1</div>
<div style="position:absolute;left:0.00px;top:265.20px;width:620.00px;height:1.00px;background:#E4E6EC;"></div>
<div style="position:absolute;left:164.00px;top:265.20px;width:1.00px;height:42.00px;background:#6a6a6a;"></div>
<div style="position:absolute;left:259.30px;top:265.20px;width:1.00px;height:42.00px;background:#6a6a6a;"></div>
<div style="position:absolute;left:358.40px;top:265.20px;width:1.00px;height:42.00px;background:#6a6a6a;"></div>
<div style="position:absolute;left:457.30px;top:265.20px;width:1.00px;height:42.00px;background:#6a6a6a;"></div>
<div style="position:absolute;left:538.20px;top:265.20px;width:1.00px;height:42.00px;background:#6a6a6a;"></div>
<div style="position:absolute;left:619.30px;top:265.20px;width:1.00px;height:42.00px;background:#6a6a6a;"></div>
<div class="t" style="left:14.50px;top:279.00px;font-size:14px;line-height:14px;color:#222;font-weight:normal;letter-spacing:0.19px;">05.08.2025 11:21:07</div>
<div class="t" style="left:182.20px;top:286.00px;font-size:14px;line-height:14px;color:#222;font-weight:normal;letter-spacing:0.05px;">18.96  °C</div>
<div class="t" style="left:111.26px;width:200px;text-align:center;top:274.00px;font-size:10px;line-height:10px;color:#BBD5F3;font-weight:normal;letter-spacing:0.12px;">+969ms</div>
<div class="t" style="left:274.60px;top:286.00px;font-size:14px;line-height:14px;color:#222;font-weight:normal;letter-spacing:0.05px;">1,031  mBar</div>
<div class="t" style="left:212.50px;width:200px;text-align:center;top:274.00px;font-size:10px;line-height:10px;color:#BBD5F3;font-weight:normal;letter-spacing:0.12px;">+969ms</div>
<div class="t" style="left:373.50px;top:286.00px;font-size:14px;line-height:14px;color:#222;font-weight:normal;letter-spacing:0.05px;">673  mBar</div>
<div class="t" style="left:305.57px;width:200px;text-align:center;top:274.00px;font-size:10px;line-height:10px;color:#BBD5F3;font-weight:normal;letter-spacing:0.12px;">+969ms</div>
<div class="t" style="left:471.80px;top:286.00px;font-size:14px;line-height:14px;color:#222;font-weight:normal;letter-spacing:0.05px;">45.0  %rF</div>
<div class="t" style="left:402.71px;width:200px;text-align:center;top:274.00px;font-size:10px;line-height:10px;color:#BBD5F3;font-weight:normal;letter-spacing:0.12px;">+969ms</div>
<div class="t" style="left:467.00px;width:200px;text-align:center;top:274.00px;font-size:10px;line-height:10px;color:#BBD5F3;font-weight:normal;letter-spacing:0.12px;">+969ms</div>
<div style="position:absolute;left:557.00px;top:285.10px;width:17.00px;height:18.60px;background:transparent;box-sizing:border-box;border:1px solid #111;"></div>
<div class="t" style="left:465.50px;width:200px;text-align:center;top:286.00px;font-size:14px;line-height:14px;color:#222;font-weight:normal;letter-spacing:0px;">0</div>
<div style="position:absolute;left:165.00px;top:266.20px;width:95.00px;height:41.00px;background:transparent;box-sizing:border-box;border:3px solid #4FE0BE;"></div>
<div style="position:absolute;left:0.00px;top:307.20px;width:620.00px;height:1.00px;background:#E4E6EC;"></div>
<div style="position:absolute;left:164.00px;top:307.20px;width:1.00px;height:37.00px;background:#6a6a6a;"></div>
<div style="position:absolute;left:259.30px;top:307.20px;width:1.00px;height:37.00px;background:#6a6a6a;"></div>
<div style="position:absolute;left:358.40px;top:307.20px;width:1.00px;height:37.00px;background:#6a6a6a;"></div>
<div style="position:absolute;left:457.30px;top:307.20px;width:1.00px;height:37.00px;background:#6a6a6a;"></div>
<div style="position:absolute;left:538.20px;top:307.20px;width:1.00px;height:37.00px;background:#6a6a6a;"></div>
<div style="position:absolute;left:619.30px;top:307.20px;width:1.00px;height:37.00px;background:#6a6a6a;"></div>
<div class="t" style="left:14.50px;top:318.00px;font-size:14px;line-height:14px;color:#222;font-weight:normal;letter-spacing:0.19px;">05.08.2025 11:21:17</div>
<div class="t" style="left:179.80px;top:326.00px;font-size:14px;line-height:14px;color:#222;font-weight:normal;letter-spacing:0.05px;">18.94  °C</div>
<div class="t" style="left:108.86px;width:200px;text-align:center;top:313.00px;font-size:10px;line-height:10px;color:#BBD5F3;font-weight:normal;letter-spacing:0.12px;">+969ms</div>
<div class="t" style="left:274.60px;top:326.00px;font-size:14px;line-height:14px;color:#222;font-weight:normal;letter-spacing:0.05px;">958  mBar</div>
<div class="t" style="left:206.67px;width:200px;text-align:center;top:313.00px;font-size:10px;line-height:10px;color:#BBD5F3;font-weight:normal;letter-spacing:0.12px;">+969ms</div>
<div class="t" style="left:373.50px;top:326.00px;font-size:14px;line-height:14px;color:#222;font-weight:normal;letter-spacing:0.05px;">713  mBar</div>
<div class="t" style="left:305.57px;width:200px;text-align:center;top:313.00px;font-size:10px;line-height:10px;color:#BBD5F3;font-weight:normal;letter-spacing:0.12px;">+969ms</div>
<div class="t" style="left:471.80px;top:326.00px;font-size:14px;line-height:14px;color:#222;font-weight:normal;letter-spacing:0.05px;">44.7  %rF</div>
<div class="t" style="left:402.71px;width:200px;text-align:center;top:313.00px;font-size:10px;line-height:10px;color:#BBD5F3;font-weight:normal;letter-spacing:0.12px;">+969ms</div>
<div class="t" style="left:467.00px;width:200px;text-align:center;top:313.00px;font-size:10px;line-height:10px;color:#BBD5F3;font-weight:normal;letter-spacing:0.12px;">+969ms</div>
<div style="position:absolute;left:557.00px;top:324.40px;width:17.00px;height:18.60px;background:transparent;box-sizing:border-box;border:1px solid #111;"></div>
<div class="t" style="left:465.50px;width:200px;text-align:center;top:326.00px;font-size:14px;line-height:14px;color:#222;font-weight:normal;letter-spacing:0px;">0</div>
<div style="position:absolute;left:0.00px;top:344.20px;width:620.00px;height:1.00px;background:#E4E6EC;"></div>
<div style="position:absolute;left:164.00px;top:344.20px;width:1.00px;height:37.00px;background:#6a6a6a;"></div>
<div style="position:absolute;left:259.30px;top:344.20px;width:1.00px;height:37.00px;background:#6a6a6a;"></div>
<div style="position:absolute;left:358.40px;top:344.20px;width:1.00px;height:37.00px;background:#6a6a6a;"></div>
<div style="position:absolute;left:457.30px;top:344.20px;width:1.00px;height:37.00px;background:#6a6a6a;"></div>
<div style="position:absolute;left:538.20px;top:344.20px;width:1.00px;height:37.00px;background:#6a6a6a;"></div>
<div style="position:absolute;left:619.30px;top:344.20px;width:1.00px;height:37.00px;background:#6a6a6a;"></div>
<div class="t" style="left:14.50px;top:355.00px;font-size:14px;line-height:14px;color:#222;font-weight:normal;letter-spacing:0.19px;">05.08.2025 11:21:27</div>
<div class="t" style="left:179.80px;top:363.00px;font-size:14px;line-height:14px;color:#222;font-weight:normal;letter-spacing:0.05px;">18.56  °C</div>
<div class="t" style="left:108.86px;width:200px;text-align:center;top:350.00px;font-size:10px;line-height:10px;color:#BBD5F3;font-weight:normal;letter-spacing:0.12px;">+969ms</div>
<div class="t" style="left:274.60px;top:363.00px;font-size:14px;line-height:14px;color:#222;font-weight:normal;letter-spacing:0.05px;">878  mBar</div>
<div class="t" style="left:206.67px;width:200px;text-align:center;top:350.00px;font-size:10px;line-height:10px;color:#BBD5F3;font-weight:normal;letter-spacing:0.12px;">+969ms</div>
<div class="t" style="left:373.50px;top:363.00px;font-size:14px;line-height:14px;color:#222;font-weight:normal;letter-spacing:0.05px;">757  mBar</div>
<div class="t" style="left:305.57px;width:200px;text-align:center;top:350.00px;font-size:10px;line-height:10px;color:#BBD5F3;font-weight:normal;letter-spacing:0.12px;">+969ms</div>
<div class="t" style="left:471.80px;top:363.00px;font-size:14px;line-height:14px;color:#222;font-weight:normal;letter-spacing:0.05px;">44.4  %rF</div>
<div class="t" style="left:402.71px;width:200px;text-align:center;top:350.00px;font-size:10px;line-height:10px;color:#BBD5F3;font-weight:normal;letter-spacing:0.12px;">+969ms</div>
<div class="t" style="left:467.00px;width:200px;text-align:center;top:350.00px;font-size:10px;line-height:10px;color:#BBD5F3;font-weight:normal;letter-spacing:0.12px;">+969ms</div>
<div style="position:absolute;left:557.00px;top:361.40px;width:17.00px;height:18.60px;background:transparent;box-sizing:border-box;border:1px solid #111;"></div>
<div class="t" style="left:465.50px;width:200px;text-align:center;top:363.00px;font-size:14px;line-height:14px;color:#222;font-weight:normal;letter-spacing:0px;">0</div>
<div style="position:absolute;left:0.00px;top:381.20px;width:620.00px;height:1.00px;background:#E4E6EC;"></div>
<div style="position:absolute;left:164.00px;top:381.20px;width:1.00px;height:37.00px;background:#6a6a6a;"></div>
<div style="position:absolute;left:259.30px;top:381.20px;width:1.00px;height:37.00px;background:#6a6a6a;"></div>
<div style="position:absolute;left:358.40px;top:381.20px;width:1.00px;height:37.00px;background:#6a6a6a;"></div>
<div style="position:absolute;left:457.30px;top:381.20px;width:1.00px;height:37.00px;background:#6a6a6a;"></div>
<div style="position:absolute;left:538.20px;top:381.20px;width:1.00px;height:37.00px;background:#6a6a6a;"></div>
<div style="position:absolute;left:619.30px;top:381.20px;width:1.00px;height:37.00px;background:#6a6a6a;"></div>
<div class="t" style="left:14.50px;top:392.00px;font-size:14px;line-height:14px;color:#222;font-weight:normal;letter-spacing:0.19px;">05.08.2025 11:21:37</div>
<div class="t" style="left:179.80px;top:400.00px;font-size:14px;line-height:14px;color:#222;font-weight:normal;letter-spacing:0.05px;">17.96  °C</div>
<div class="t" style="left:108.86px;width:200px;text-align:center;top:387.00px;font-size:10px;line-height:10px;color:#BBD5F3;font-weight:normal;letter-spacing:0.12px;">+969ms</div>
<div class="t" style="left:274.60px;top:400.00px;font-size:14px;line-height:14px;color:#222;font-weight:normal;letter-spacing:0.05px;">795  mBar</div>
<div class="t" style="left:206.67px;width:200px;text-align:center;top:387.00px;font-size:10px;line-height:10px;color:#BBD5F3;font-weight:normal;letter-spacing:0.12px;">+969ms</div>
<div class="t" style="left:373.50px;top:400.00px;font-size:14px;line-height:14px;color:#222;font-weight:normal;letter-spacing:0.05px;">803  mBar</div>
<div class="t" style="left:305.57px;width:200px;text-align:center;top:387.00px;font-size:10px;line-height:10px;color:#BBD5F3;font-weight:normal;letter-spacing:0.12px;">+969ms</div>
<div class="t" style="left:471.80px;top:400.00px;font-size:14px;line-height:14px;color:#222;font-weight:normal;letter-spacing:0.05px;">44.2  %rF</div>
<div class="t" style="left:402.71px;width:200px;text-align:center;top:387.00px;font-size:10px;line-height:10px;color:#BBD5F3;font-weight:normal;letter-spacing:0.12px;">+969ms</div>
<div class="t" style="left:467.00px;width:200px;text-align:center;top:387.00px;font-size:10px;line-height:10px;color:#BBD5F3;font-weight:normal;letter-spacing:0.12px;">+969ms</div>
<div style="position:absolute;left:557.00px;top:398.40px;width:17.00px;height:18.60px;background:transparent;box-sizing:border-box;border:1px solid #111;"></div>
<div class="t" style="left:465.50px;width:200px;text-align:center;top:400.00px;font-size:14px;line-height:14px;color:#222;font-weight:normal;letter-spacing:0px;">0</div>
<div style="position:absolute;left:0.00px;top:418.20px;width:620.00px;height:1.00px;background:#E4E6EC;"></div>
<div style="position:absolute;left:164.00px;top:418.20px;width:1.00px;height:37.00px;background:#6a6a6a;"></div>
<div style="position:absolute;left:259.30px;top:418.20px;width:1.00px;height:37.00px;background:#6a6a6a;"></div>
<div style="position:absolute;left:358.40px;top:418.20px;width:1.00px;height:37.00px;background:#6a6a6a;"></div>
<div style="position:absolute;left:457.30px;top:418.20px;width:1.00px;height:37.00px;background:#6a6a6a;"></div>
<div style="position:absolute;left:538.20px;top:418.20px;width:1.00px;height:37.00px;background:#6a6a6a;"></div>
<div style="position:absolute;left:619.30px;top:418.20px;width:1.00px;height:37.00px;background:#6a6a6a;"></div>
<div class="t" style="left:14.50px;top:429.00px;font-size:14px;line-height:14px;color:#222;font-weight:normal;letter-spacing:0.19px;">05.08.2025 11:21:47</div>
<div class="t" style="left:179.80px;top:437.00px;font-size:14px;line-height:14px;color:#222;font-weight:normal;letter-spacing:0.05px;">17.38  °C</div>
<div class="t" style="left:108.86px;width:200px;text-align:center;top:424.00px;font-size:10px;line-height:10px;color:#BBD5F3;font-weight:normal;letter-spacing:0.12px;">+969ms</div>
<div class="t" style="left:274.60px;top:437.00px;font-size:14px;line-height:14px;color:#222;font-weight:normal;letter-spacing:0.05px;">712  mBar</div>
<div class="t" style="left:206.67px;width:200px;text-align:center;top:424.00px;font-size:10px;line-height:10px;color:#BBD5F3;font-weight:normal;letter-spacing:0.12px;">+969ms</div>
<div class="t" style="left:373.50px;top:437.00px;font-size:14px;line-height:14px;color:#222;font-weight:normal;letter-spacing:0.05px;">848  mBar</div>
<div class="t" style="left:305.57px;width:200px;text-align:center;top:424.00px;font-size:10px;line-height:10px;color:#BBD5F3;font-weight:normal;letter-spacing:0.12px;">+969ms</div>
<div class="t" style="left:471.80px;top:437.00px;font-size:14px;line-height:14px;color:#222;font-weight:normal;letter-spacing:0.05px;">44.1  %rF</div>
<div class="t" style="left:402.71px;width:200px;text-align:center;top:424.00px;font-size:10px;line-height:10px;color:#BBD5F3;font-weight:normal;letter-spacing:0.12px;">+969ms</div>
<div class="t" style="left:467.00px;width:200px;text-align:center;top:424.00px;font-size:10px;line-height:10px;color:#BBD5F3;font-weight:normal;letter-spacing:0.12px;">+969ms</div>
<div style="position:absolute;left:557.00px;top:435.40px;width:17.00px;height:18.60px;background:transparent;box-sizing:border-box;border:1px solid #111;"></div>
<div class="t" style="left:465.50px;width:200px;text-align:center;top:437.00px;font-size:14px;line-height:14px;color:#222;font-weight:normal;letter-spacing:0px;">0</div>
<div style="position:absolute;left:0.00px;top:455.20px;width:620.00px;height:1.00px;background:#E4E6EC;"></div>
<div style="position:absolute;left:164.00px;top:455.20px;width:1.00px;height:37.00px;background:#6a6a6a;"></div>
<div style="position:absolute;left:259.30px;top:455.20px;width:1.00px;height:37.00px;background:#6a6a6a;"></div>
<div style="position:absolute;left:358.40px;top:455.20px;width:1.00px;height:37.00px;background:#6a6a6a;"></div>
<div style="position:absolute;left:457.30px;top:455.20px;width:1.00px;height:37.00px;background:#6a6a6a;"></div>
<div style="position:absolute;left:538.20px;top:455.20px;width:1.00px;height:37.00px;background:#6a6a6a;"></div>
<div style="position:absolute;left:619.30px;top:455.20px;width:1.00px;height:37.00px;background:#6a6a6a;"></div>
<div class="t" style="left:14.50px;top:466.00px;font-size:14px;line-height:14px;color:#222;font-weight:normal;letter-spacing:0.19px;">05.08.2025 11:21:57</div>
<div class="t" style="left:179.80px;top:474.00px;font-size:14px;line-height:14px;color:#222;font-weight:normal;letter-spacing:0.05px;">17.04  °C</div>
<div class="t" style="left:108.86px;width:200px;text-align:center;top:461.00px;font-size:10px;line-height:10px;color:#BBD5F3;font-weight:normal;letter-spacing:0.12px;">+969ms</div>
<div class="t" style="left:274.60px;top:474.00px;font-size:14px;line-height:14px;color:#222;font-weight:normal;letter-spacing:0.05px;">633  mBar</div>
<div class="t" style="left:206.67px;width:200px;text-align:center;top:461.00px;font-size:10px;line-height:10px;color:#BBD5F3;font-weight:normal;letter-spacing:0.12px;">+969ms</div>
<div class="t" style="left:373.50px;top:474.00px;font-size:14px;line-height:14px;color:#222;font-weight:normal;letter-spacing:0.05px;">892  mBar</div>
<div class="t" style="left:305.57px;width:200px;text-align:center;top:461.00px;font-size:10px;line-height:10px;color:#BBD5F3;font-weight:normal;letter-spacing:0.12px;">+969ms</div>
<div class="t" style="left:471.80px;top:474.00px;font-size:14px;line-height:14px;color:#222;font-weight:normal;letter-spacing:0.05px;">44.0  %rF</div>
<div class="t" style="left:402.71px;width:200px;text-align:center;top:461.00px;font-size:10px;line-height:10px;color:#BBD5F3;font-weight:normal;letter-spacing:0.12px;">+969ms</div>
<div class="t" style="left:467.00px;width:200px;text-align:center;top:461.00px;font-size:10px;line-height:10px;color:#BBD5F3;font-weight:normal;letter-spacing:0.12px;">+969ms</div>
<div style="position:absolute;left:557.00px;top:472.40px;width:17.00px;height:18.60px;background:transparent;box-sizing:border-box;border:1px solid #111;"></div>
<div class="t" style="left:465.50px;width:200px;text-align:center;top:474.00px;font-size:14px;line-height:14px;color:#222;font-weight:normal;letter-spacing:0px;">1</div>
<div style="position:absolute;left:0.00px;top:492.20px;width:620.00px;height:1.00px;background:#E4E6EC;"></div>
<div style="position:absolute;left:164.00px;top:492.20px;width:1.00px;height:37.00px;background:#6a6a6a;"></div>
<div style="position:absolute;left:259.30px;top:492.20px;width:1.00px;height:37.00px;background:#6a6a6a;"></div>
<div style="position:absolute;left:358.40px;top:492.20px;width:1.00px;height:37.00px;background:#6a6a6a;"></div>
<div style="position:absolute;left:457.30px;top:492.20px;width:1.00px;height:37.00px;background:#6a6a6a;"></div>
<div style="position:absolute;left:538.20px;top:492.20px;width:1.00px;height:37.00px;background:#6a6a6a;"></div>
<div style="position:absolute;left:619.30px;top:492.20px;width:1.00px;height:37.00px;background:#6a6a6a;"></div>
<div class="t" style="left:14.50px;top:503.00px;font-size:14px;line-height:14px;color:#222;font-weight:normal;letter-spacing:0.19px;">05.08.2025 11:22:07</div>
<div class="t" style="left:179.80px;top:511.00px;font-size:14px;line-height:14px;color:#222;font-weight:normal;letter-spacing:0.05px;">16.90  °C</div>
<div class="t" style="left:108.86px;width:200px;text-align:center;top:498.00px;font-size:10px;line-height:10px;color:#BBD5F3;font-weight:normal;letter-spacing:0.12px;">+969ms</div>
<div class="t" style="left:274.60px;top:511.00px;font-size:14px;line-height:14px;color:#222;font-weight:normal;letter-spacing:0.05px;">560  mBar</div>
<div class="t" style="left:206.67px;width:200px;text-align:center;top:498.00px;font-size:10px;line-height:10px;color:#BBD5F3;font-weight:normal;letter-spacing:0.12px;">+969ms</div>
<div class="t" style="left:373.50px;top:511.00px;font-size:14px;line-height:14px;color:#222;font-weight:normal;letter-spacing:0.05px;">930  mBar</div>
<div class="t" style="left:305.57px;width:200px;text-align:center;top:498.00px;font-size:10px;line-height:10px;color:#BBD5F3;font-weight:normal;letter-spacing:0.12px;">+969ms</div>
<div class="t" style="left:471.80px;top:511.00px;font-size:14px;line-height:14px;color:#222;font-weight:normal;letter-spacing:0.05px;">43.9  %rF</div>
<div class="t" style="left:402.71px;width:200px;text-align:center;top:498.00px;font-size:10px;line-height:10px;color:#BBD5F3;font-weight:normal;letter-spacing:0.12px;">+969ms</div>
<div class="t" style="left:467.00px;width:200px;text-align:center;top:498.00px;font-size:10px;line-height:10px;color:#BBD5F3;font-weight:normal;letter-spacing:0.12px;">+969ms</div>
<div style="position:absolute;left:557.00px;top:509.40px;width:17.00px;height:18.60px;background:transparent;box-sizing:border-box;border:1px solid #111;"></div>
<div class="t" style="left:465.50px;width:200px;text-align:center;top:511.00px;font-size:14px;line-height:14px;color:#222;font-weight:normal;letter-spacing:0px;">1</div>
<div style="position:absolute;left:0.00px;top:529.20px;width:620.00px;height:1.00px;background:#E4E6EC;"></div>
<div style="position:absolute;left:0.00px;top:36.00px;width:620.00px;height:45.00px;background:#fff;"></div>
<div class="t" style="left:7.70px;top:60.00px;font-size:14px;line-height:14px;color:#111;font-weight:normal;letter-spacing:0.15px;-webkit-text-stroke:0.55px #111;">Time</div>
<div style="position:absolute;left:67.00px;top:40.00px;width:32.00px;height:32.00px;background:#dedede;border-radius:50%;"></div>
<div style="position:absolute;left:111.80px;top:40.00px;width:32.00px;height:32.00px;background:#dedede;border-radius:50%;"></div>
<svg style="position:absolute;left:77px;top:52px" width="12" height="8"><path d="M1.3 6.5 L6 1.8 L10.7 6.5" fill="none" stroke="#9a9a9a" stroke-width="1.5"/></svg>
<svg style="position:absolute;left:122px;top:52px" width="12" height="8"><path d="M1.3 1.5 L6 6.2 L10.7 1.5" fill="none" stroke="#9a9a9a" stroke-width="1.5"/></svg>
<div class="t" style="left:172.60px;top:49.00px;font-size:12px;line-height:12px;color:#111;font-weight:normal;letter-spacing:0px;-webkit-text-stroke:0.4px #111;">Temperatur</div>
<div class="t" style="left:172.60px;top:63.00px;font-size:12px;line-height:12px;color:#111;font-weight:normal;letter-spacing:0.1px;-webkit-text-stroke:0.4px #111;">T38.1</div>
<svg style="position:absolute;left:235.9px;top:54.0px" width="17" height="17" viewBox="0 0 24 24"><path d="M3.5 18.49l6-6.01 4 4L22 6.92l-1.41-1.41-7.09 7.97-4-4L2 16.99z" fill="#111" stroke="#111" stroke-width="0.5"/></svg>
<div class="t" style="left:267.60px;top:62.00px;font-size:12px;line-height:12px;color:#111;font-weight:normal;letter-spacing:-0.2px;-webkit-text-stroke:0.4px #111;">Druck P54.2</div>
<svg style="position:absolute;left:335.6px;top:54.0px" width="17" height="17" viewBox="0 0 24 24"><path d="M3.5 18.49l6-6.01 4 4L22 6.92l-1.41-1.41-7.09 7.97-4-4L2 16.99z" fill="#111" stroke="#111" stroke-width="0.5"/></svg>
<div class="t" style="left:366.40px;top:62.00px;font-size:12px;line-height:12px;color:#111;font-weight:normal;letter-spacing:-0.2px;-webkit-text-stroke:0.4px #111;">Druck P56.2</div>
<svg style="position:absolute;left:434.6px;top:54.0px" width="17" height="17" viewBox="0 0 24 24"><path d="M3.5 18.49l6-6.01 4 4L22 6.92l-1.41-1.41-7.09 7.97-4-4L2 16.99z" fill="#111" stroke="#111" stroke-width="0.5"/></svg>
<div class="t" style="left:465.20px;top:49.00px;font-size:12px;line-height:12px;color:#111;font-weight:normal;letter-spacing:-0.22px;-webkit-text-stroke:0.4px #111;">Feuchte</div>
<div class="t" style="left:465.20px;top:62.00px;font-size:12px;line-height:12px;color:#111;font-weight:normal;letter-spacing:0px;-webkit-text-stroke:0.4px #111;">H79.3</div>
<svg style="position:absolute;left:515.2px;top:54.0px" width="17" height="17" viewBox="0 0 24 24"><path d="M3.5 18.49l6-6.01 4 4L22 6.92l-1.41-1.41-7.09 7.97-4-4L2 16.99z" fill="#111" stroke="#111" stroke-width="0.5"/></svg>
<div class="t" style="left:546.00px;top:49.00px;font-size:12px;line-height:12px;color:#111;font-weight:normal;letter-spacing:-0.1px;-webkit-text-stroke:0.4px #111;">Schleuse</div>
<div class="t" style="left:546.00px;top:62.00px;font-size:12px;line-height:12px;color:#111;font-weight:normal;letter-spacing:0px;-webkit-text-stroke:0.4px #111;">P102</div>
<svg style="position:absolute;left:596.9px;top:54.0px" width="17" height="17" viewBox="0 0 24 24"><path d="M3.5 18.49l6-6.01 4 4L22 6.92l-1.41-1.41-7.09 7.97-4-4L2 16.99z" fill="#111" stroke="#111" stroke-width="0.5"/></svg>
<div style="position:absolute;left:0.00px;top:81.00px;width:164.50px;height:5.00px;background:#000;"></div>
<div style="position:absolute;left:164.50px;top:81.00px;width:95.30px;height:5.00px;background:#D62728;"></div>
<div style="position:absolute;left:259.80px;top:81.00px;width:99.10px;height:5.00px;background:#1F77B4;"></div>
<div style="position:absolute;left:358.90px;top:81.00px;width:98.90px;height:5.00px;background:#AEC7E8;"></div>
<div style="position:absolute;left:457.80px;top:81.00px;width:80.90px;height:5.00px;background:#98DF8A;"></div>
<div style="position:absolute;left:538.70px;top:81.00px;width:81.10px;height:5.00px;background:#BCBD22;"></div>
</div>
<div style="position:absolute;left:1853px;top:370px;width:8px;height:499px;border-radius:4px;background:linear-gradient(90deg,#8c8c8c,#a9a9a9 50%,#8c8c8c);"></div>
<div style="position:absolute;left:1852.3px;top:468.7px;width:9.4px;height:37px;border-radius:4.7px;background:linear-gradient(90deg,#666,#707070 50%,#666);"></div>
<div style="position:absolute;left:1231px;top:870.5px;width:620px;height:9px;border-radius:4.5px;background:linear-gradient(180deg,#8c8c8c,#a9a9a9 50%,#8c8c8c);"></div>
<div style="position:absolute;left:1231px;top:870.5px;width:460px;height:9px;border-radius:4.5px;background:linear-gradient(180deg,#5f5f5f,#6c6c6c 50%,#5f5f5f);"></div>
</body></html>
